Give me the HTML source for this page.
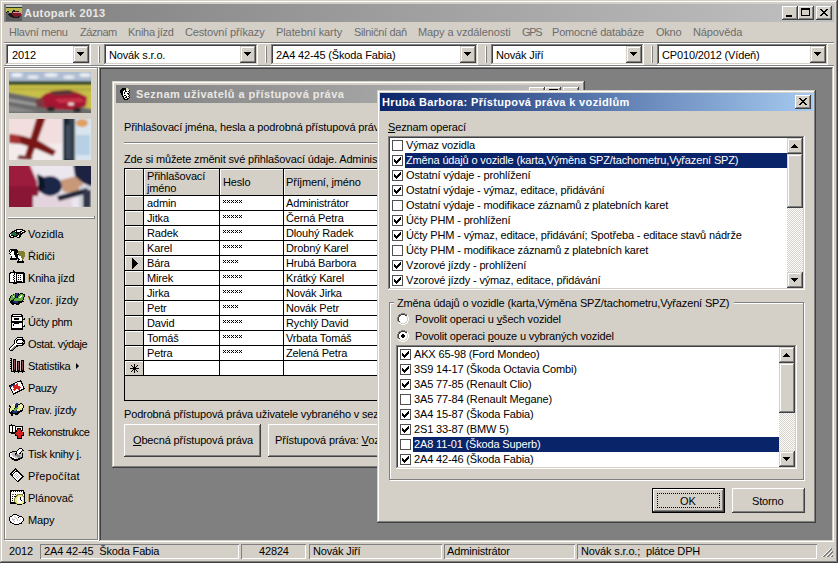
<!DOCTYPE html>
<html><head><meta charset="utf-8"><style>
html,body{margin:0;padding:0;}
body{width:838px;height:563px;overflow:hidden;position:relative;background:#d4d0c8;font-family:"Liberation Sans",sans-serif;font-size:11px;}
body div, body svg{position:absolute;}
.t{position:absolute;white-space:pre;line-height:13px;font-size:11px;}
u{text-decoration:underline;}
</style></head><body>
<div style="left:0px;top:0px;width:838px;height:563px;background:#d4d0c8;box-shadow:inset -1px -1px #404040,inset 1px 1px #d4d0c8,inset -2px -2px #808080,inset 2px 2px #ffffff;"></div>
<div style="left:4px;top:4px;width:830px;height:18px;background:linear-gradient(90deg,#808080,#c0c0c0)"></div>
<svg style="position:absolute;left:6px;top:5px" width="16" height="16" shape-rendering="crispEdges"><rect x="0" y="0" width="16" height="1" fill="#c4c8d0"/><rect x="0" y="1" width="16" height="1" fill="#c4c8d0"/><rect x="0" y="2" width="16" height="1" fill="#283818"/><rect x="0" y="3" width="16" height="1" fill="#b8b848"/><rect x="0" y="4" width="16" height="1" fill="#b8b848"/><rect x="0" y="5" width="7" height="1" fill="#b8b848"/><rect x="7" y="5" width="2" height="1" fill="#181818"/><rect x="9" y="5" width="7" height="1" fill="#b8b848"/><rect x="0" y="6" width="1" height="1" fill="#b8b848"/><rect x="1" y="6" width="2" height="1" fill="#181818"/><rect x="3" y="6" width="3" height="1" fill="#b8b848"/><rect x="6" y="6" width="3" height="1" fill="#181818"/><rect x="9" y="6" width="2" height="1" fill="#801828"/><rect x="11" y="6" width="2" height="1" fill="#181818"/><rect x="13" y="6" width="3" height="1" fill="#b8b848"/><rect x="0" y="7" width="1" height="1" fill="#181818"/><rect x="1" y="7" width="2" height="1" fill="#5c5c5c"/><rect x="3" y="7" width="3" height="1" fill="#b8b848"/><rect x="6" y="7" width="1" height="1" fill="#181818"/><rect x="7" y="7" width="8" height="1" fill="#d89098"/><rect x="15" y="7" width="1" height="1" fill="#b8b848"/><rect x="0" y="8" width="3" height="1" fill="#5c5c5c"/><rect x="3" y="8" width="3" height="1" fill="#181818"/><rect x="6" y="8" width="9" height="1" fill="#801828"/><rect x="15" y="8" width="1" height="1" fill="#d89098"/><rect x="0" y="9" width="2" height="1" fill="#5c5c5c"/><rect x="2" y="9" width="4" height="1" fill="#181818"/><rect x="6" y="9" width="9" height="1" fill="#801828"/><rect x="15" y="9" width="1" height="1" fill="#5c5c5c"/><rect x="0" y="10" width="3" height="1" fill="#5c5c5c"/><rect x="3" y="10" width="4" height="1" fill="#181818"/><rect x="7" y="10" width="8" height="1" fill="#801828"/><rect x="15" y="10" width="1" height="1" fill="#5c5c5c"/><rect x="0" y="11" width="4" height="1" fill="#5c5c5c"/><rect x="4" y="11" width="4" height="1" fill="#181818"/><rect x="8" y="11" width="4" height="1" fill="#801828"/><rect x="12" y="11" width="2" height="1" fill="#181818"/><rect x="14" y="11" width="2" height="1" fill="#5c5c5c"/><rect x="0" y="12" width="6" height="1" fill="#5c5c5c"/><rect x="6" y="12" width="1" height="1" fill="#303030"/><rect x="7" y="12" width="6" height="1" fill="#181818"/><rect x="13" y="12" width="3" height="1" fill="#5c5c5c"/><rect x="0" y="13" width="16" height="1" fill="#5c5c5c"/><rect x="0" y="14" width="16" height="1" fill="#5c5c5c"/><rect x="0" y="15" width="16" height="1" fill="#5c5c5c"/></svg>
<span class="t" style="left:24px;top:7px;color:#eae8e4;font-weight:bold;letter-spacing:0.45px;font-size:11px;">Autopark 2013</span>
<div style="left:782px;top:6px;width:16px;height:14px;background:#d4d0c8;box-shadow:inset -1px -1px #404040,inset 1px 1px #ffffff,inset -2px -2px #808080,inset 2px 2px #d4d0c8;"></div>
<div style="left:798px;top:6px;width:16px;height:14px;background:#d4d0c8;box-shadow:inset -1px -1px #404040,inset 1px 1px #ffffff,inset -2px -2px #808080,inset 2px 2px #d4d0c8;"></div>
<div style="left:816px;top:6px;width:16px;height:14px;background:#d4d0c8;box-shadow:inset -1px -1px #404040,inset 1px 1px #ffffff,inset -2px -2px #808080,inset 2px 2px #d4d0c8;"></div>
<svg style="position:absolute;left:786px;top:15px" width="6" height="2" shape-rendering="crispEdges"><rect x="0" y="0" width="6" height="1" fill="#000000"/><rect x="0" y="1" width="6" height="1" fill="#000000"/></svg>
<svg style="position:absolute;left:801px;top:8px" width="9" height="8" shape-rendering="crispEdges"><rect x="0" y="0" width="9" height="1" fill="#000000"/><rect x="0" y="1" width="9" height="1" fill="#000000"/><rect x="0" y="2" width="1" height="1" fill="#000000"/><rect x="8" y="2" width="1" height="1" fill="#000000"/><rect x="0" y="3" width="1" height="1" fill="#000000"/><rect x="8" y="3" width="1" height="1" fill="#000000"/><rect x="0" y="4" width="1" height="1" fill="#000000"/><rect x="8" y="4" width="1" height="1" fill="#000000"/><rect x="0" y="5" width="1" height="1" fill="#000000"/><rect x="8" y="5" width="1" height="1" fill="#000000"/><rect x="0" y="6" width="1" height="1" fill="#000000"/><rect x="8" y="6" width="1" height="1" fill="#000000"/><rect x="0" y="7" width="9" height="1" fill="#000000"/></svg>
<svg style="position:absolute;left:820px;top:9px" width="8" height="7" shape-rendering="crispEdges"><rect x="0" y="0" width="2" height="1" fill="#000000"/><rect x="6" y="0" width="2" height="1" fill="#000000"/><rect x="1" y="1" width="2" height="1" fill="#000000"/><rect x="5" y="1" width="2" height="1" fill="#000000"/><rect x="2" y="2" width="4" height="1" fill="#000000"/><rect x="3" y="3" width="2" height="1" fill="#000000"/><rect x="2" y="4" width="4" height="1" fill="#000000"/><rect x="1" y="5" width="2" height="1" fill="#000000"/><rect x="5" y="5" width="2" height="1" fill="#000000"/><rect x="0" y="6" width="2" height="1" fill="#000000"/><rect x="6" y="6" width="2" height="1" fill="#000000"/></svg>
<span class="t" style="left:9px;top:26px;color:#6c6c6c;font-weight:normal;letter-spacing:-0.279px;font-size:11px;">Hlavní menu</span>
<span class="t" style="left:80px;top:26px;color:#6c6c6c;font-weight:normal;letter-spacing:-0.492px;font-size:11px;">Záznam</span>
<span class="t" style="left:128px;top:26px;color:#6c6c6c;font-weight:normal;letter-spacing:-0.261px;font-size:11px;">Kniha jízd</span>
<span class="t" style="left:185px;top:26px;color:#6c6c6c;font-weight:normal;letter-spacing:-0.151px;font-size:11px;">Cestovní příkazy</span>
<span class="t" style="left:276px;top:26px;color:#6c6c6c;font-weight:normal;letter-spacing:-0.083px;font-size:11px;">Platební karty</span>
<span class="t" style="left:354px;top:26px;color:#6c6c6c;font-weight:normal;letter-spacing:-0.331px;font-size:11px;">Silniční daň</span>
<span class="t" style="left:418px;top:26px;color:#6c6c6c;font-weight:normal;letter-spacing:-0.093px;font-size:11px;">Mapy a vzdálenosti</span>
<span class="t" style="left:522px;top:26px;color:#6c6c6c;font-weight:normal;letter-spacing:-1.378px;font-size:11px;">GPS</span>
<span class="t" style="left:552px;top:26px;color:#6c6c6c;font-weight:normal;letter-spacing:-0.175px;font-size:11px;">Pomocné databáze</span>
<span class="t" style="left:656px;top:26px;color:#6c6c6c;font-weight:normal;letter-spacing:-0.224px;font-size:11px;">Okno</span>
<span class="t" style="left:693px;top:26px;color:#6c6c6c;font-weight:normal;letter-spacing:-0.107px;font-size:11px;">Nápověda</span>
<div style="left:4px;top:42px;width:830px;height:1px;background:#808080"></div>
<div style="left:4px;top:43px;width:830px;height:1px;background:#ffffff"></div>
<div style="left:4px;top:65px;width:830px;height:1px;background:#808080"></div>
<div style="left:4px;top:66px;width:830px;height:1px;background:#ffffff"></div>
<div style="left:6px;top:44px;width:85px;height:21px;background:#fff;box-shadow:inset -1px -1px #ffffff,inset 1px 1px #808080,inset -2px -2px #d4d0c8,inset 2px 2px #404040;"></div>
<div style="left:73px;top:46px;width:16px;height:17px;background:#d4d0c8;box-shadow:inset -1px -1px #404040,inset 1px 1px #d4d0c8,inset -2px -2px #808080,inset 2px 2px #ffffff;"></div>
<svg style="position:absolute;left:77px;top:52px" width="7" height="4" shape-rendering="crispEdges"><rect x="0" y="0" width="7" height="1" fill="#000000"/><rect x="1" y="1" width="5" height="1" fill="#000000"/><rect x="2" y="2" width="3" height="1" fill="#000000"/><rect x="3" y="3" width="1" height="1" fill="#000000"/></svg>
<span class="t" style="left:12px;top:49px;color:#000;font-weight:normal;letter-spacing:-0.15px;font-size:11px;">2012</span>
<div style="left:104px;top:44px;width:154px;height:21px;background:#fff;box-shadow:inset -1px -1px #ffffff,inset 1px 1px #808080,inset -2px -2px #d4d0c8,inset 2px 2px #404040;"></div>
<div style="left:240px;top:46px;width:16px;height:17px;background:#d4d0c8;box-shadow:inset -1px -1px #404040,inset 1px 1px #d4d0c8,inset -2px -2px #808080,inset 2px 2px #ffffff;"></div>
<svg style="position:absolute;left:244px;top:52px" width="7" height="4" shape-rendering="crispEdges"><rect x="0" y="0" width="7" height="1" fill="#000000"/><rect x="1" y="1" width="5" height="1" fill="#000000"/><rect x="2" y="2" width="3" height="1" fill="#000000"/><rect x="3" y="3" width="1" height="1" fill="#000000"/></svg>
<span class="t" style="left:109px;top:49px;color:#000;font-weight:normal;letter-spacing:-0.15px;font-size:11px;">Novák s.r.o.</span>
<div style="left:271px;top:44px;width:207px;height:21px;background:#fff;box-shadow:inset -1px -1px #ffffff,inset 1px 1px #808080,inset -2px -2px #d4d0c8,inset 2px 2px #404040;"></div>
<div style="left:460px;top:46px;width:16px;height:17px;background:#d4d0c8;box-shadow:inset -1px -1px #404040,inset 1px 1px #d4d0c8,inset -2px -2px #808080,inset 2px 2px #ffffff;"></div>
<svg style="position:absolute;left:464px;top:52px" width="7" height="4" shape-rendering="crispEdges"><rect x="0" y="0" width="7" height="1" fill="#000000"/><rect x="1" y="1" width="5" height="1" fill="#000000"/><rect x="2" y="2" width="3" height="1" fill="#000000"/><rect x="3" y="3" width="1" height="1" fill="#000000"/></svg>
<span class="t" style="left:276px;top:49px;color:#000;font-weight:normal;letter-spacing:-0.15px;font-size:11px;">2A4 42-45 (Škoda Fabia)</span>
<div style="left:491px;top:44px;width:153px;height:21px;background:#fff;box-shadow:inset -1px -1px #ffffff,inset 1px 1px #808080,inset -2px -2px #d4d0c8,inset 2px 2px #404040;"></div>
<div style="left:626px;top:46px;width:16px;height:17px;background:#d4d0c8;box-shadow:inset -1px -1px #404040,inset 1px 1px #d4d0c8,inset -2px -2px #808080,inset 2px 2px #ffffff;"></div>
<svg style="position:absolute;left:630px;top:52px" width="7" height="4" shape-rendering="crispEdges"><rect x="0" y="0" width="7" height="1" fill="#000000"/><rect x="1" y="1" width="5" height="1" fill="#000000"/><rect x="2" y="2" width="3" height="1" fill="#000000"/><rect x="3" y="3" width="1" height="1" fill="#000000"/></svg>
<span class="t" style="left:496px;top:49px;color:#000;font-weight:normal;letter-spacing:-0.15px;font-size:11px;">Novák Jiří</span>
<div style="left:657px;top:44px;width:171px;height:21px;background:#fff;box-shadow:inset -1px -1px #ffffff,inset 1px 1px #808080,inset -2px -2px #d4d0c8,inset 2px 2px #404040;"></div>
<div style="left:810px;top:46px;width:16px;height:17px;background:#d4d0c8;box-shadow:inset -1px -1px #404040,inset 1px 1px #d4d0c8,inset -2px -2px #808080,inset 2px 2px #ffffff;"></div>
<svg style="position:absolute;left:814px;top:52px" width="7" height="4" shape-rendering="crispEdges"><rect x="0" y="0" width="7" height="1" fill="#000000"/><rect x="1" y="1" width="5" height="1" fill="#000000"/><rect x="2" y="2" width="3" height="1" fill="#000000"/><rect x="3" y="3" width="1" height="1" fill="#000000"/></svg>
<span class="t" style="left:662px;top:49px;color:#000;font-weight:normal;letter-spacing:-0.15px;font-size:11px;">CP010/2012 (Vídeň)</span>
<div style="left:98px;top:46px;width:1px;height:17px;background:#ffffff"></div>
<div style="left:99px;top:46px;width:1px;height:17px;background:#808080"></div>
<div style="left:265px;top:46px;width:1px;height:17px;background:#ffffff"></div>
<div style="left:266px;top:46px;width:1px;height:17px;background:#808080"></div>
<div style="left:485px;top:46px;width:1px;height:17px;background:#ffffff"></div>
<div style="left:486px;top:46px;width:1px;height:17px;background:#808080"></div>
<div style="left:651px;top:46px;width:1px;height:17px;background:#ffffff"></div>
<div style="left:652px;top:46px;width:1px;height:17px;background:#808080"></div>
<div style="left:4px;top:67px;width:94px;height:473px;box-shadow:inset 1px 1px #808080,1px 1px 0 #ffffff, inset -1px -1px #808080, inset 2px 2px #ffffff"></div>
<svg style="position:absolute;left:9px;top:72px" width="82" height="41"><defs><filter id="bl1" x="-10%" y="-10%" width="120%" height="120%"><feGaussianBlur stdDeviation="1"/></filter><clipPath id="c1"><rect width="82" height="41"/></clipPath></defs>
<g clip-path="url(#c1)"><g filter="url(#bl1)">
<rect x="-3" y="-3" width="90" height="16" fill="#aebcd2"/>
<ellipse cx="8" cy="3" rx="6" ry="2" fill="#eef2f6"/><ellipse cx="24" cy="5" rx="6" ry="2" fill="#e2e8f0"/><ellipse cx="42" cy="3" rx="7" ry="2" fill="#eaeef4"/><ellipse cx="60" cy="5" rx="6" ry="2" fill="#e4e8ee"/><ellipse cx="76" cy="3" rx="6" ry="2" fill="#eceff2"/>
<rect x="-3" y="9" width="90" height="4" fill="#34482a"/>
<polygon points="-3,13 86,13 86,38 45,30 -3,21" fill="#c8c04a"/>
<polygon points="-3,16 86,16 86,19 -3,18" fill="#b4ac3e"/>
<polygon points="-3,20 45,29 86,38 86,44 -3,44" fill="#6a6a6a"/>
<polygon points="-3,26 40,34 40,36 -3,29" fill="#a0a0a0"/>
<polygon points="-3,33 30,40 -3,40" fill="#8a8a8a"/>
<polygon points="30,27 36,22 44,19 60,18 70,21 78,25 77,34 64,38 38,37 31,33" fill="#a41830"/><polygon points="26,28 34,26 36,36 28,35" fill="#7a3a40"/>
<polygon points="42,20 60,18 66,22 44,23" fill="#503838"/>
<polygon points="46,27 72,26 76,30 50,31" fill="#c83048"/>
<ellipse cx="62" cy="32" rx="3" ry="1.5" fill="#f0e0e0"/>
<ellipse cx="42" cy="37" rx="4" ry="2.5" fill="#282828"/><ellipse cx="68" cy="38" rx="4" ry="2.5" fill="#282828"/>
</g></g></svg>
<svg style="position:absolute;left:9px;top:119px" width="82" height="41"><defs><filter id="bl2" x="-10%" y="-10%" width="120%" height="120%"><feGaussianBlur stdDeviation="0.8"/></filter><clipPath id="c2"><rect width="82" height="41"/></clipPath></defs>
<g clip-path="url(#c2)"><g filter="url(#bl2)">
<rect x="-3" y="-3" width="60" height="50" fill="#f2dede"/>
<rect x="-3" y="25" width="60" height="20" fill="#f4ecec"/>
<polygon points="28,-2 37,-2 22,40 15,40" fill="#7a1818"/>
<polygon points="0,15 14,17 30,22 47,32 44,37 28,30 12,25 0,24" fill="#7a1818"/>
<polygon points="0,15 10,16 12,24 0,24" fill="#a83030"/>
<polygon points="10,36 24,38 22,41 8,40" fill="#7a3030"/>
<rect x="53" y="-3" width="32" height="50" fill="#d8e4ee"/>
<rect x="54" y="-3" width="6" height="50" fill="#1c2630"/><rect x="60" y="-3" width="6" height="50" fill="#34404c"/>
<rect x="57" y="6" width="4" height="34" fill="#405060"/>
<ellipse cx="73" cy="4" rx="6" ry="4" fill="#e0a060"/>
<rect x="67" y="16" width="14" height="20" fill="#b8d0e4"/>
</g></g></svg>
<svg style="position:absolute;left:9px;top:166px" width="82" height="41"><defs><filter id="bl3" x="-10%" y="-10%" width="120%" height="120%"><feGaussianBlur stdDeviation="1"/></filter><clipPath id="c3"><rect width="82" height="41"/></clipPath></defs>
<g clip-path="url(#c3)"><g filter="url(#bl3)">
<rect x="-3" y="-3" width="90" height="50" fill="#ece6ee"/>
<polygon points="-3,-3 20,-3 28,16 30,44 -3,44" fill="#9c1c3c"/>
<polygon points="-3,20 30,20 28,44 -3,44" fill="#8a1834"/>
<polygon points="24,30 62,30 64,44 24,44" fill="#e4d4de"/>
<ellipse cx="41" cy="20" rx="12" ry="10" fill="#1c2848"/>
<polygon points="28,8 35,11 36,22 30,26" fill="#101828"/>
<polygon points="52,14 68,10 74,18 70,27 54,26" fill="#c89878"/>
<polygon points="64,-3 85,-3 85,22 74,17 66,10" fill="#1c2440"/>
<rect x="70" y="20" width="14" height="24" fill="#d0d2da"/>
<polygon points="48,30 78,22 80,27 50,35" fill="#202838"/>
<rect x="74" y="24" width="8" height="18" fill="#303848"/>
</g></g></svg>
<div style="left:8px;top:217px;width:87px;height:1px;background:#ffffff"></div>
<div style="left:8px;top:218px;width:87px;height:1px;background:#808080"></div>
<div style="left:94px;top:216px;width:1px;height:3px;background:#808080"></div>
<span class="t" style="left:28px;top:228px;color:#000;font-weight:normal;letter-spacing:0.031px;font-size:11px;">Vozidla</span>
<svg style="position:absolute;left:6px;top:222px" width="20" height="16" shape-rendering="crispEdges"><rect x="10" y="7" width="7" height="1" fill="#000000"/><rect x="8" y="8" width="3" height="1" fill="#000000"/><rect x="11" y="8" width="5" height="1" fill="#ffffff"/><rect x="16" y="8" width="3" height="1" fill="#000000"/><rect x="6" y="9" width="3" height="1" fill="#000000"/><rect x="9" y="9" width="1" height="1" fill="#ffffff"/><rect x="10" y="9" width="1" height="1" fill="#000000"/><rect x="11" y="9" width="3" height="1" fill="#ffffff"/><rect x="14" y="9" width="2" height="1" fill="#000000"/><rect x="16" y="9" width="2" height="1" fill="#ffffff"/><rect x="18" y="9" width="2" height="1" fill="#000000"/><rect x="5" y="10" width="2" height="1" fill="#000000"/><rect x="7" y="10" width="2" height="1" fill="#207040"/><rect x="9" y="10" width="6" height="1" fill="#000000"/><rect x="15" y="10" width="1" height="1" fill="#ffffff"/><rect x="16" y="10" width="3" height="1" fill="#000000"/><rect x="4" y="11" width="1" height="1" fill="#000000"/><rect x="5" y="11" width="5" height="1" fill="#207040"/><rect x="10" y="11" width="3" height="1" fill="#000000"/><rect x="13" y="11" width="1" height="1" fill="#207040"/><rect x="14" y="11" width="3" height="1" fill="#000000"/><rect x="3" y="12" width="1" height="1" fill="#000000"/><rect x="4" y="12" width="1" height="1" fill="#ffffff"/><rect x="5" y="12" width="7" height="1" fill="#207040"/><rect x="12" y="12" width="1" height="1" fill="#000000"/><rect x="13" y="12" width="1" height="1" fill="#207040"/><rect x="14" y="12" width="2" height="1" fill="#000000"/><rect x="3" y="13" width="1" height="1" fill="#000000"/><rect x="4" y="13" width="1" height="1" fill="#ffffff"/><rect x="5" y="13" width="3" height="1" fill="#000000"/><rect x="8" y="13" width="2" height="1" fill="#207040"/><rect x="10" y="13" width="2" height="1" fill="#000000"/><rect x="12" y="13" width="1" height="1" fill="#ffffff"/><rect x="13" y="13" width="2" height="1" fill="#000000"/><rect x="3" y="14" width="2" height="1" fill="#000000"/><rect x="5" y="14" width="2" height="1" fill="#ffffff"/><rect x="7" y="14" width="4" height="1" fill="#000000"/><rect x="11" y="14" width="2" height="1" fill="#ffffff"/><rect x="13" y="14" width="2" height="1" fill="#000000"/><rect x="4" y="15" width="4" height="1" fill="#000000"/><rect x="11" y="15" width="3" height="1" fill="#000000"/></svg>
<span class="t" style="left:28px;top:250px;color:#000;font-weight:normal;letter-spacing:-0.034px;font-size:11px;">Řidiči</span>
<svg style="position:absolute;left:7px;top:246px" width="20" height="17" shape-rendering="crispEdges"><rect x="3" y="3" width="7" height="1" fill="#000000"/><rect x="2" y="4" width="1" height="1" fill="#000000"/><rect x="3" y="4" width="1" height="1" fill="#ffffff"/><rect x="4" y="4" width="7" height="1" fill="#000000"/><rect x="2" y="5" width="1" height="1" fill="#000000"/><rect x="3" y="5" width="1" height="1" fill="#ffffff"/><rect x="4" y="5" width="1" height="1" fill="#000000"/><rect x="5" y="5" width="2" height="1" fill="#ffffff"/><rect x="7" y="5" width="4" height="1" fill="#000000"/><rect x="11" y="5" width="6" height="1" fill="#808030"/><rect x="3" y="6" width="1" height="1" fill="#000000"/><rect x="4" y="6" width="3" height="1" fill="#ffffff"/><rect x="7" y="6" width="4" height="1" fill="#000000"/><rect x="11" y="6" width="7" height="1" fill="#808030"/><rect x="2" y="7" width="1" height="1" fill="#000000"/><rect x="3" y="7" width="4" height="1" fill="#ffffff"/><rect x="7" y="7" width="3" height="1" fill="#000000"/><rect x="10" y="7" width="1" height="1" fill="#ffffff"/><rect x="11" y="7" width="7" height="1" fill="#808030"/><rect x="3" y="8" width="1" height="1" fill="#000000"/><rect x="4" y="8" width="3" height="1" fill="#ffffff"/><rect x="7" y="8" width="5" height="1" fill="#000000"/><rect x="12" y="8" width="6" height="1" fill="#808030"/><rect x="3" y="9" width="5" height="1" fill="#ffffff"/><rect x="8" y="9" width="3" height="1" fill="#000000"/><rect x="11" y="9" width="1" height="1" fill="#ffffff"/><rect x="12" y="9" width="6" height="1" fill="#808030"/><rect x="4" y="10" width="1" height="1" fill="#000000"/><rect x="5" y="10" width="3" height="1" fill="#ffffff"/><rect x="8" y="10" width="3" height="1" fill="#000000"/><rect x="11" y="10" width="3" height="1" fill="#ffffff"/><rect x="14" y="10" width="4" height="1" fill="#808030"/><rect x="4" y="11" width="1" height="1" fill="#000000"/><rect x="5" y="11" width="4" height="1" fill="#ffffff"/><rect x="9" y="11" width="2" height="1" fill="#000000"/><rect x="11" y="11" width="3" height="1" fill="#ffffff"/><rect x="14" y="11" width="3" height="1" fill="#808030"/><rect x="3" y="12" width="9" height="1" fill="#000000"/><rect x="12" y="12" width="3" height="1" fill="#ffffff"/><rect x="15" y="12" width="2" height="1" fill="#808030"/><rect x="3" y="13" width="7" height="1" fill="#000000"/><rect x="11" y="13" width="2" height="1" fill="#000000"/><rect x="13" y="13" width="2" height="1" fill="#ffffff"/><rect x="15" y="13" width="1" height="1" fill="#808030"/><rect x="11" y="14" width="1" height="1" fill="#000000"/><rect x="12" y="14" width="3" height="1" fill="#ffffff"/><rect x="15" y="14" width="1" height="1" fill="#000000"/><rect x="10" y="15" width="7" height="1" fill="#000000"/><rect x="10" y="16" width="7" height="1" fill="#000000"/></svg>
<span class="t" style="left:28px;top:272px;color:#000;font-weight:normal;letter-spacing:-0.201px;font-size:11px;">Kniha jízd</span>
<svg style="position:absolute;left:7px;top:267px" width="20" height="17" shape-rendering="crispEdges"><rect x="6" y="3" width="1" height="1" fill="#000000"/><rect x="6" y="4" width="2" height="1" fill="#000000"/><rect x="3" y="5" width="14" height="1" fill="#000000"/><rect x="2" y="6" width="2" height="1" fill="#000000"/><rect x="4" y="6" width="3" height="1" fill="#ffffff"/><rect x="7" y="6" width="1" height="1" fill="#000000"/><rect x="8" y="6" width="1" height="1" fill="#ffffff"/><rect x="9" y="6" width="9" height="1" fill="#000000"/><rect x="2" y="7" width="1" height="1" fill="#000000"/><rect x="3" y="7" width="4" height="1" fill="#ffffff"/><rect x="7" y="7" width="1" height="1" fill="#000000"/><rect x="8" y="7" width="1" height="1" fill="#ffffff"/><rect x="9" y="7" width="1" height="1" fill="#000000"/><rect x="10" y="7" width="6" height="1" fill="#ffffff"/><rect x="16" y="7" width="2" height="1" fill="#000000"/><rect x="2" y="8" width="1" height="1" fill="#000000"/><rect x="3" y="8" width="3" height="1" fill="#ffffff"/><rect x="6" y="8" width="1" height="1" fill="#000000"/><rect x="7" y="8" width="2" height="1" fill="#ffffff"/><rect x="9" y="8" width="1" height="1" fill="#000000"/><rect x="10" y="8" width="1" height="1" fill="#ffffff"/><rect x="11" y="8" width="1" height="1" fill="#000000"/><rect x="12" y="8" width="1" height="1" fill="#ffffff"/><rect x="13" y="8" width="1" height="1" fill="#000000"/><rect x="14" y="8" width="2" height="1" fill="#ffffff"/><rect x="16" y="8" width="2" height="1" fill="#000000"/><rect x="2" y="9" width="1" height="1" fill="#000000"/><rect x="3" y="9" width="4" height="1" fill="#ffffff"/><rect x="7" y="9" width="1" height="1" fill="#000000"/><rect x="8" y="9" width="1" height="1" fill="#ffffff"/><rect x="9" y="9" width="1" height="1" fill="#000000"/><rect x="10" y="9" width="6" height="1" fill="#ffffff"/><rect x="16" y="9" width="2" height="1" fill="#000000"/><rect x="2" y="10" width="1" height="1" fill="#000000"/><rect x="3" y="10" width="3" height="1" fill="#ffffff"/><rect x="6" y="10" width="1" height="1" fill="#000000"/><rect x="7" y="10" width="2" height="1" fill="#ffffff"/><rect x="9" y="10" width="1" height="1" fill="#000000"/><rect x="10" y="10" width="1" height="1" fill="#ffffff"/><rect x="11" y="10" width="1" height="1" fill="#000000"/><rect x="12" y="10" width="1" height="1" fill="#ffffff"/><rect x="13" y="10" width="1" height="1" fill="#000000"/><rect x="14" y="10" width="2" height="1" fill="#ffffff"/><rect x="16" y="10" width="2" height="1" fill="#000000"/><rect x="2" y="11" width="1" height="1" fill="#000000"/><rect x="3" y="11" width="4" height="1" fill="#ffffff"/><rect x="7" y="11" width="1" height="1" fill="#000000"/><rect x="8" y="11" width="1" height="1" fill="#ffffff"/><rect x="9" y="11" width="1" height="1" fill="#000000"/><rect x="10" y="11" width="6" height="1" fill="#ffffff"/><rect x="16" y="11" width="2" height="1" fill="#000000"/><rect x="2" y="12" width="1" height="1" fill="#000000"/><rect x="3" y="12" width="3" height="1" fill="#ffffff"/><rect x="6" y="12" width="1" height="1" fill="#000000"/><rect x="7" y="12" width="2" height="1" fill="#ffffff"/><rect x="9" y="12" width="1" height="1" fill="#000000"/><rect x="10" y="12" width="1" height="1" fill="#ffffff"/><rect x="11" y="12" width="1" height="1" fill="#000000"/><rect x="12" y="12" width="1" height="1" fill="#ffffff"/><rect x="13" y="12" width="1" height="1" fill="#000000"/><rect x="14" y="12" width="2" height="1" fill="#ffffff"/><rect x="16" y="12" width="2" height="1" fill="#000000"/><rect x="2" y="13" width="1" height="1" fill="#000000"/><rect x="3" y="13" width="4" height="1" fill="#ffffff"/><rect x="7" y="13" width="1" height="1" fill="#000000"/><rect x="8" y="13" width="1" height="1" fill="#ffffff"/><rect x="9" y="13" width="1" height="1" fill="#000000"/><rect x="10" y="13" width="6" height="1" fill="#ffffff"/><rect x="16" y="13" width="2" height="1" fill="#000000"/><rect x="2" y="14" width="1" height="1" fill="#000000"/><rect x="3" y="14" width="4" height="1" fill="#ffffff"/><rect x="7" y="14" width="1" height="1" fill="#000000"/><rect x="8" y="14" width="1" height="1" fill="#ffffff"/><rect x="9" y="14" width="6" height="1" fill="#000000"/><rect x="15" y="14" width="1" height="1" fill="#ffffff"/><rect x="16" y="14" width="2" height="1" fill="#000000"/><rect x="2" y="15" width="16" height="1" fill="#000000"/><rect x="6" y="16" width="4" height="1" fill="#000000"/></svg>
<span class="t" style="left:28px;top:294px;color:#000;font-weight:normal;letter-spacing:-0.041px;font-size:11px;">Vzor. jízdy</span>
<svg style="position:absolute;left:7px;top:290px" width="20" height="15" shape-rendering="crispEdges"><rect x="8" y="3" width="1" height="1" fill="#000000"/><rect x="9" y="3" width="2" height="1" fill="#203080"/><rect x="11" y="3" width="1" height="1" fill="#000000"/><rect x="13" y="3" width="3" height="1" fill="#000000"/><rect x="6" y="4" width="1" height="1" fill="#000000"/><rect x="7" y="4" width="1" height="1" fill="#60b040"/><rect x="8" y="4" width="3" height="1" fill="#203080"/><rect x="11" y="4" width="2" height="1" fill="#000000"/><rect x="13" y="4" width="3" height="1" fill="#60b040"/><rect x="16" y="4" width="2" height="1" fill="#000000"/><rect x="4" y="5" width="1" height="1" fill="#000000"/><rect x="5" y="5" width="3" height="1" fill="#60b040"/><rect x="8" y="5" width="1" height="1" fill="#000000"/><rect x="9" y="5" width="2" height="1" fill="#203080"/><rect x="11" y="5" width="1" height="1" fill="#000000"/><rect x="12" y="5" width="2" height="1" fill="#60b040"/><rect x="14" y="5" width="1" height="1" fill="#ffffff"/><rect x="15" y="5" width="2" height="1" fill="#60b040"/><rect x="17" y="5" width="1" height="1" fill="#000000"/><rect x="3" y="6" width="1" height="1" fill="#000000"/><rect x="4" y="6" width="2" height="1" fill="#60b040"/><rect x="6" y="6" width="1" height="1" fill="#ffffff"/><rect x="7" y="6" width="1" height="1" fill="#60b040"/><rect x="8" y="6" width="1" height="1" fill="#000000"/><rect x="9" y="6" width="1" height="1" fill="#203080"/><rect x="10" y="6" width="1" height="1" fill="#000000"/><rect x="11" y="6" width="2" height="1" fill="#60b040"/><rect x="13" y="6" width="2" height="1" fill="#ffffff"/><rect x="15" y="6" width="2" height="1" fill="#60b040"/><rect x="17" y="6" width="1" height="1" fill="#000000"/><rect x="3" y="7" width="1" height="1" fill="#000000"/><rect x="4" y="7" width="4" height="1" fill="#60b040"/><rect x="8" y="7" width="1" height="1" fill="#000000"/><rect x="9" y="7" width="1" height="1" fill="#203080"/><rect x="10" y="7" width="1" height="1" fill="#000000"/><rect x="11" y="7" width="1" height="1" fill="#60b040"/><rect x="12" y="7" width="2" height="1" fill="#ffffff"/><rect x="14" y="7" width="2" height="1" fill="#60b040"/><rect x="16" y="7" width="1" height="1" fill="#000000"/><rect x="2" y="8" width="1" height="1" fill="#000000"/><rect x="3" y="8" width="4" height="1" fill="#60b040"/><rect x="7" y="8" width="1" height="1" fill="#000000"/><rect x="8" y="8" width="8" height="1" fill="#60b040"/><rect x="16" y="8" width="1" height="1" fill="#000000"/><rect x="2" y="9" width="1" height="1" fill="#000000"/><rect x="3" y="9" width="3" height="1" fill="#60b040"/><rect x="6" y="9" width="1" height="1" fill="#000000"/><rect x="7" y="9" width="9" height="1" fill="#60b040"/><rect x="16" y="9" width="1" height="1" fill="#000000"/><rect x="2" y="10" width="1" height="1" fill="#000000"/><rect x="3" y="10" width="1" height="1" fill="#60b040"/><rect x="4" y="10" width="3" height="1" fill="#000000"/><rect x="7" y="10" width="8" height="1" fill="#60b040"/><rect x="15" y="10" width="1" height="1" fill="#000000"/><rect x="3" y="11" width="3" height="1" fill="#000000"/><rect x="6" y="11" width="5" height="1" fill="#203080"/><rect x="11" y="11" width="6" height="1" fill="#000000"/><rect x="3" y="12" width="4" height="1" fill="#000000"/><rect x="7" y="12" width="4" height="1" fill="#203080"/><rect x="11" y="12" width="4" height="1" fill="#000000"/><rect x="4" y="13" width="9" height="1" fill="#000000"/><rect x="5" y="14" width="2" height="1" fill="#000000"/><rect x="9" y="14" width="3" height="1" fill="#000000"/></svg>
<span class="t" style="left:28px;top:316px;color:#000;font-weight:normal;letter-spacing:-0.284px;font-size:11px;">Účty phm</span>
<svg style="position:absolute;left:7px;top:313px" width="20" height="17" shape-rendering="crispEdges"><rect x="5" y="1" width="10" height="1" fill="#000000"/><rect x="4" y="2" width="2" height="1" fill="#000000"/><rect x="6" y="2" width="8" height="1" fill="#ffffff"/><rect x="14" y="2" width="2" height="1" fill="#000000"/><rect x="4" y="3" width="12" height="1" fill="#000000"/><rect x="4" y="4" width="1" height="1" fill="#000000"/><rect x="5" y="4" width="10" height="1" fill="#ffffff"/><rect x="15" y="4" width="1" height="1" fill="#000000"/><rect x="4" y="5" width="1" height="1" fill="#000000"/><rect x="5" y="5" width="2" height="1" fill="#ffffff"/><rect x="7" y="5" width="5" height="1" fill="#000000"/><rect x="12" y="5" width="3" height="1" fill="#ffffff"/><rect x="15" y="5" width="1" height="1" fill="#000000"/><rect x="17" y="5" width="1" height="1" fill="#000000"/><rect x="4" y="6" width="1" height="1" fill="#000000"/><rect x="5" y="6" width="2" height="1" fill="#ffffff"/><rect x="7" y="6" width="5" height="1" fill="#000000"/><rect x="12" y="6" width="3" height="1" fill="#ffffff"/><rect x="15" y="6" width="3" height="1" fill="#000000"/><rect x="4" y="7" width="1" height="1" fill="#000000"/><rect x="5" y="7" width="10" height="1" fill="#ffffff"/><rect x="15" y="7" width="1" height="1" fill="#000000"/><rect x="4" y="8" width="12" height="1" fill="#000000"/><rect x="4" y="9" width="12" height="1" fill="#000000"/><rect x="16" y="9" width="1" height="1" fill="#ffffff"/><rect x="4" y="10" width="1" height="1" fill="#000000"/><rect x="5" y="10" width="2" height="1" fill="#ffffff"/><rect x="7" y="10" width="5" height="1" fill="#000000"/><rect x="12" y="10" width="3" height="1" fill="#ffffff"/><rect x="15" y="10" width="1" height="1" fill="#000000"/><rect x="16" y="10" width="1" height="1" fill="#ffffff"/><rect x="4" y="11" width="1" height="1" fill="#000000"/><rect x="5" y="11" width="1" height="1" fill="#ffffff"/><rect x="6" y="11" width="1" height="1" fill="#000000"/><rect x="7" y="11" width="8" height="1" fill="#ffffff"/><rect x="15" y="11" width="1" height="1" fill="#000000"/><rect x="16" y="11" width="1" height="1" fill="#ffffff"/><rect x="4" y="12" width="1" height="1" fill="#000000"/><rect x="5" y="12" width="1" height="1" fill="#ffffff"/><rect x="6" y="12" width="1" height="1" fill="#000000"/><rect x="7" y="12" width="8" height="1" fill="#ffffff"/><rect x="15" y="12" width="1" height="1" fill="#000000"/><rect x="16" y="12" width="1" height="1" fill="#ffffff"/><rect x="17" y="12" width="1" height="1" fill="#000000"/><rect x="4" y="13" width="1" height="1" fill="#000000"/><rect x="5" y="13" width="10" height="1" fill="#ffffff"/><rect x="15" y="13" width="3" height="1" fill="#000000"/><rect x="4" y="14" width="1" height="1" fill="#000000"/><rect x="5" y="14" width="10" height="1" fill="#ffffff"/><rect x="15" y="14" width="1" height="1" fill="#000000"/><rect x="4" y="15" width="12" height="1" fill="#000000"/><rect x="4" y="16" width="12" height="1" fill="#000000"/></svg>
<span class="t" style="left:28px;top:338px;color:#000;font-weight:normal;letter-spacing:-0.377px;font-size:11px;">Ostat. výdaje</span>
<svg style="position:absolute;left:7px;top:335px" width="20" height="16" shape-rendering="crispEdges"><rect x="10" y="2" width="6" height="1" fill="#000000"/><rect x="9" y="3" width="1" height="1" fill="#000000"/><rect x="10" y="3" width="5" height="1" fill="#ffffff"/><rect x="15" y="3" width="1" height="1" fill="#000000"/><rect x="8" y="4" width="1" height="1" fill="#000000"/><rect x="9" y="4" width="1" height="1" fill="#ffffff"/><rect x="10" y="4" width="7" height="1" fill="#000000"/><rect x="7" y="5" width="1" height="1" fill="#000000"/><rect x="8" y="5" width="1" height="1" fill="#ffffff"/><rect x="9" y="5" width="2" height="1" fill="#000000"/><rect x="11" y="5" width="4" height="1" fill="#ffffff"/><rect x="15" y="5" width="3" height="1" fill="#000000"/><rect x="7" y="6" width="1" height="1" fill="#000000"/><rect x="8" y="6" width="1" height="1" fill="#ffffff"/><rect x="9" y="6" width="1" height="1" fill="#000000"/><rect x="10" y="6" width="6" height="1" fill="#ffffff"/><rect x="16" y="6" width="2" height="1" fill="#000000"/><rect x="7" y="7" width="1" height="1" fill="#000000"/><rect x="8" y="7" width="1" height="1" fill="#ffffff"/><rect x="9" y="7" width="1" height="1" fill="#000000"/><rect x="10" y="7" width="5" height="1" fill="#ffffff"/><rect x="15" y="7" width="1" height="1" fill="#000000"/><rect x="17" y="7" width="1" height="1" fill="#000000"/><rect x="7" y="8" width="1" height="1" fill="#000000"/><rect x="8" y="8" width="2" height="1" fill="#ffffff"/><rect x="10" y="8" width="8" height="1" fill="#000000"/><rect x="6" y="9" width="1" height="1" fill="#000000"/><rect x="7" y="9" width="8" height="1" fill="#ffffff"/><rect x="15" y="9" width="2" height="1" fill="#000000"/><rect x="5" y="10" width="1" height="1" fill="#000000"/><rect x="6" y="10" width="3" height="1" fill="#ffffff"/><rect x="9" y="10" width="7" height="1" fill="#000000"/><rect x="4" y="11" width="1" height="1" fill="#000000"/><rect x="5" y="11" width="2" height="1" fill="#ffffff"/><rect x="7" y="11" width="2" height="1" fill="#808080"/><rect x="9" y="11" width="2" height="1" fill="#000000"/><rect x="3" y="12" width="1" height="1" fill="#000000"/><rect x="4" y="12" width="2" height="1" fill="#ffffff"/><rect x="6" y="12" width="2" height="1" fill="#808080"/><rect x="8" y="12" width="1" height="1" fill="#000000"/><rect x="2" y="13" width="1" height="1" fill="#000000"/><rect x="3" y="13" width="2" height="1" fill="#ffffff"/><rect x="5" y="13" width="2" height="1" fill="#808080"/><rect x="7" y="13" width="1" height="1" fill="#000000"/><rect x="2" y="14" width="1" height="1" fill="#000000"/><rect x="3" y="14" width="1" height="1" fill="#ffffff"/><rect x="4" y="14" width="2" height="1" fill="#808080"/><rect x="6" y="14" width="1" height="1" fill="#000000"/><rect x="3" y="15" width="3" height="1" fill="#000000"/></svg>
<span class="t" style="left:28px;top:360px;color:#000;font-weight:normal;letter-spacing:-0.224px;font-size:11px;">Statistika</span>
<svg style="position:absolute;left:7px;top:356px" width="20" height="17" shape-rendering="crispEdges"><rect x="3" y="2" width="2" height="1" fill="#000000"/><rect x="4" y="3" width="1" height="1" fill="#000000"/><rect x="6" y="3" width="3" height="1" fill="#000000"/><rect x="3" y="4" width="2" height="1" fill="#000000"/><rect x="6" y="4" width="1" height="1" fill="#000000"/><rect x="7" y="4" width="1" height="1" fill="#904858"/><rect x="8" y="4" width="1" height="1" fill="#000000"/><rect x="14" y="4" width="3" height="1" fill="#000000"/><rect x="4" y="5" width="1" height="1" fill="#000000"/><rect x="6" y="5" width="1" height="1" fill="#000000"/><rect x="7" y="5" width="1" height="1" fill="#904858"/><rect x="8" y="5" width="1" height="1" fill="#000000"/><rect x="10" y="5" width="3" height="1" fill="#000000"/><rect x="14" y="5" width="1" height="1" fill="#000000"/><rect x="15" y="5" width="1" height="1" fill="#904858"/><rect x="16" y="5" width="1" height="1" fill="#000000"/><rect x="3" y="6" width="2" height="1" fill="#000000"/><rect x="6" y="6" width="1" height="1" fill="#000000"/><rect x="7" y="6" width="1" height="1" fill="#904858"/><rect x="8" y="6" width="1" height="1" fill="#000000"/><rect x="10" y="6" width="1" height="1" fill="#000000"/><rect x="11" y="6" width="1" height="1" fill="#904858"/><rect x="12" y="6" width="1" height="1" fill="#000000"/><rect x="14" y="6" width="1" height="1" fill="#000000"/><rect x="15" y="6" width="1" height="1" fill="#904858"/><rect x="16" y="6" width="1" height="1" fill="#000000"/><rect x="4" y="7" width="1" height="1" fill="#000000"/><rect x="6" y="7" width="1" height="1" fill="#000000"/><rect x="7" y="7" width="1" height="1" fill="#904858"/><rect x="8" y="7" width="1" height="1" fill="#000000"/><rect x="10" y="7" width="1" height="1" fill="#000000"/><rect x="11" y="7" width="1" height="1" fill="#904858"/><rect x="12" y="7" width="1" height="1" fill="#000000"/><rect x="14" y="7" width="1" height="1" fill="#000000"/><rect x="15" y="7" width="1" height="1" fill="#904858"/><rect x="16" y="7" width="1" height="1" fill="#000000"/><rect x="3" y="8" width="2" height="1" fill="#000000"/><rect x="6" y="8" width="1" height="1" fill="#000000"/><rect x="7" y="8" width="1" height="1" fill="#904858"/><rect x="8" y="8" width="1" height="1" fill="#000000"/><rect x="10" y="8" width="1" height="1" fill="#000000"/><rect x="11" y="8" width="1" height="1" fill="#904858"/><rect x="12" y="8" width="1" height="1" fill="#000000"/><rect x="14" y="8" width="1" height="1" fill="#000000"/><rect x="15" y="8" width="1" height="1" fill="#904858"/><rect x="16" y="8" width="1" height="1" fill="#000000"/><rect x="4" y="9" width="1" height="1" fill="#000000"/><rect x="6" y="9" width="1" height="1" fill="#000000"/><rect x="7" y="9" width="1" height="1" fill="#904858"/><rect x="8" y="9" width="1" height="1" fill="#000000"/><rect x="10" y="9" width="1" height="1" fill="#000000"/><rect x="11" y="9" width="1" height="1" fill="#904858"/><rect x="12" y="9" width="1" height="1" fill="#000000"/><rect x="14" y="9" width="1" height="1" fill="#000000"/><rect x="15" y="9" width="1" height="1" fill="#904858"/><rect x="16" y="9" width="1" height="1" fill="#000000"/><rect x="3" y="10" width="2" height="1" fill="#000000"/><rect x="6" y="10" width="1" height="1" fill="#000000"/><rect x="7" y="10" width="1" height="1" fill="#904858"/><rect x="8" y="10" width="1" height="1" fill="#000000"/><rect x="10" y="10" width="1" height="1" fill="#000000"/><rect x="11" y="10" width="1" height="1" fill="#904858"/><rect x="12" y="10" width="1" height="1" fill="#000000"/><rect x="14" y="10" width="1" height="1" fill="#000000"/><rect x="15" y="10" width="1" height="1" fill="#904858"/><rect x="16" y="10" width="1" height="1" fill="#000000"/><rect x="4" y="11" width="1" height="1" fill="#000000"/><rect x="6" y="11" width="1" height="1" fill="#000000"/><rect x="7" y="11" width="1" height="1" fill="#904858"/><rect x="8" y="11" width="1" height="1" fill="#000000"/><rect x="10" y="11" width="1" height="1" fill="#000000"/><rect x="11" y="11" width="1" height="1" fill="#904858"/><rect x="12" y="11" width="1" height="1" fill="#000000"/><rect x="14" y="11" width="1" height="1" fill="#000000"/><rect x="15" y="11" width="1" height="1" fill="#904858"/><rect x="16" y="11" width="1" height="1" fill="#000000"/><rect x="3" y="12" width="2" height="1" fill="#000000"/><rect x="6" y="12" width="1" height="1" fill="#000000"/><rect x="7" y="12" width="1" height="1" fill="#904858"/><rect x="8" y="12" width="1" height="1" fill="#000000"/><rect x="10" y="12" width="1" height="1" fill="#000000"/><rect x="11" y="12" width="1" height="1" fill="#904858"/><rect x="12" y="12" width="1" height="1" fill="#000000"/><rect x="14" y="12" width="1" height="1" fill="#000000"/><rect x="15" y="12" width="1" height="1" fill="#904858"/><rect x="16" y="12" width="1" height="1" fill="#000000"/><rect x="4" y="13" width="1" height="1" fill="#000000"/><rect x="6" y="13" width="1" height="1" fill="#000000"/><rect x="7" y="13" width="1" height="1" fill="#904858"/><rect x="8" y="13" width="1" height="1" fill="#000000"/><rect x="10" y="13" width="1" height="1" fill="#000000"/><rect x="11" y="13" width="1" height="1" fill="#904858"/><rect x="12" y="13" width="1" height="1" fill="#000000"/><rect x="14" y="13" width="1" height="1" fill="#000000"/><rect x="15" y="13" width="1" height="1" fill="#904858"/><rect x="16" y="13" width="1" height="1" fill="#000000"/><rect x="4" y="14" width="1" height="1" fill="#000000"/><rect x="6" y="14" width="3" height="1" fill="#000000"/><rect x="10" y="14" width="3" height="1" fill="#000000"/><rect x="14" y="14" width="3" height="1" fill="#000000"/><rect x="4" y="15" width="14" height="1" fill="#000000"/><rect x="7" y="16" width="1" height="1" fill="#000000"/><rect x="11" y="16" width="1" height="1" fill="#000000"/><rect x="15" y="16" width="1" height="1" fill="#000000"/></svg>
<span class="t" style="left:28px;top:382px;color:#000;font-weight:normal;letter-spacing:-0.336px;font-size:11px;">Pauzy</span>
<svg style="position:absolute;left:7px;top:378px" width="19" height="17" shape-rendering="crispEdges"><rect x="13" y="2" width="1" height="1" fill="#000000"/><rect x="10" y="3" width="5" height="1" fill="#000000"/><rect x="8" y="4" width="2" height="1" fill="#000000"/><rect x="10" y="4" width="4" height="1" fill="#ffffff"/><rect x="14" y="4" width="1" height="1" fill="#000000"/><rect x="6" y="5" width="2" height="1" fill="#000000"/><rect x="8" y="5" width="2" height="1" fill="#ffffff"/><rect x="10" y="5" width="1" height="1" fill="#d02020"/><rect x="11" y="5" width="3" height="1" fill="#ffffff"/><rect x="14" y="5" width="2" height="1" fill="#000000"/><rect x="4" y="6" width="2" height="1" fill="#000000"/><rect x="6" y="6" width="2" height="1" fill="#203080"/><rect x="8" y="6" width="1" height="1" fill="#ffffff"/><rect x="9" y="6" width="2" height="1" fill="#d02020"/><rect x="11" y="6" width="4" height="1" fill="#ffffff"/><rect x="15" y="6" width="1" height="1" fill="#000000"/><rect x="2" y="7" width="2" height="1" fill="#000000"/><rect x="4" y="7" width="3" height="1" fill="#203080"/><rect x="7" y="7" width="4" height="1" fill="#d02020"/><rect x="11" y="7" width="4" height="1" fill="#ffffff"/><rect x="15" y="7" width="1" height="1" fill="#000000"/><rect x="2" y="8" width="1" height="1" fill="#000000"/><rect x="3" y="8" width="2" height="1" fill="#203080"/><rect x="5" y="8" width="1" height="1" fill="#ffffff"/><rect x="6" y="8" width="7" height="1" fill="#d02020"/><rect x="13" y="8" width="3" height="1" fill="#ffffff"/><rect x="16" y="8" width="1" height="1" fill="#000000"/><rect x="3" y="9" width="1" height="1" fill="#000000"/><rect x="4" y="9" width="2" height="1" fill="#ffffff"/><rect x="6" y="9" width="8" height="1" fill="#d02020"/><rect x="14" y="9" width="2" height="1" fill="#ffffff"/><rect x="16" y="9" width="1" height="1" fill="#000000"/><rect x="3" y="10" width="1" height="1" fill="#000000"/><rect x="4" y="10" width="3" height="1" fill="#ffffff"/><rect x="7" y="10" width="6" height="1" fill="#d02020"/><rect x="13" y="10" width="3" height="1" fill="#ffffff"/><rect x="16" y="10" width="2" height="1" fill="#000000"/><rect x="4" y="11" width="1" height="1" fill="#000000"/><rect x="5" y="11" width="1" height="1" fill="#ffffff"/><rect x="6" y="11" width="3" height="1" fill="#d02020"/><rect x="9" y="11" width="2" height="1" fill="#ffffff"/><rect x="11" y="11" width="2" height="1" fill="#d02020"/><rect x="13" y="11" width="1" height="1" fill="#ffffff"/><rect x="14" y="11" width="3" height="1" fill="#000000"/><rect x="4" y="12" width="1" height="1" fill="#000000"/><rect x="5" y="12" width="2" height="1" fill="#ffffff"/><rect x="7" y="12" width="1" height="1" fill="#d02020"/><rect x="8" y="12" width="4" height="1" fill="#ffffff"/><rect x="12" y="12" width="3" height="1" fill="#000000"/><rect x="5" y="13" width="1" height="1" fill="#000000"/><rect x="6" y="13" width="4" height="1" fill="#ffffff"/><rect x="10" y="13" width="3" height="1" fill="#000000"/><rect x="5" y="14" width="1" height="1" fill="#000000"/><rect x="6" y="14" width="2" height="1" fill="#ffffff"/><rect x="8" y="14" width="3" height="1" fill="#000000"/><rect x="6" y="15" width="3" height="1" fill="#000000"/><rect x="6" y="16" width="1" height="1" fill="#000000"/></svg>
<span class="t" style="left:28px;top:404px;color:#000;font-weight:normal;letter-spacing:-0.194px;font-size:11px;">Prav. jízdy</span>
<svg style="position:absolute;left:7px;top:400px" width="19" height="16" shape-rendering="crispEdges"><rect x="9" y="3" width="2" height="1" fill="#203080"/><rect x="13" y="3" width="2" height="1" fill="#000000"/><rect x="6" y="4" width="2" height="1" fill="#ffffff"/><rect x="8" y="4" width="3" height="1" fill="#203080"/><rect x="11" y="4" width="2" height="1" fill="#000000"/><rect x="13" y="4" width="2" height="1" fill="#e8e890"/><rect x="15" y="4" width="1" height="1" fill="#000000"/><rect x="2" y="5" width="1" height="1" fill="#000000"/><rect x="5" y="5" width="1" height="1" fill="#ffffff"/><rect x="6" y="5" width="2" height="1" fill="#e8e890"/><rect x="8" y="5" width="2" height="1" fill="#203080"/><rect x="10" y="5" width="1" height="1" fill="#000000"/><rect x="11" y="5" width="2" height="1" fill="#e8e890"/><rect x="13" y="5" width="1" height="1" fill="#ffffff"/><rect x="14" y="5" width="2" height="1" fill="#e8e890"/><rect x="16" y="5" width="1" height="1" fill="#000000"/><rect x="2" y="6" width="2" height="1" fill="#000000"/><rect x="4" y="6" width="4" height="1" fill="#e8e890"/><rect x="8" y="6" width="1" height="1" fill="#000000"/><rect x="9" y="6" width="1" height="1" fill="#203080"/><rect x="10" y="6" width="1" height="1" fill="#000000"/><rect x="11" y="6" width="3" height="1" fill="#e8e890"/><rect x="14" y="6" width="1" height="1" fill="#ffffff"/><rect x="15" y="6" width="1" height="1" fill="#e8e890"/><rect x="16" y="6" width="1" height="1" fill="#000000"/><rect x="3" y="7" width="1" height="1" fill="#000000"/><rect x="4" y="7" width="4" height="1" fill="#e8e890"/><rect x="8" y="7" width="1" height="1" fill="#000000"/><rect x="9" y="7" width="1" height="1" fill="#203080"/><rect x="10" y="7" width="1" height="1" fill="#60b040"/><rect x="11" y="7" width="2" height="1" fill="#e8e890"/><rect x="13" y="7" width="1" height="1" fill="#ffffff"/><rect x="14" y="7" width="2" height="1" fill="#e8e890"/><rect x="16" y="7" width="1" height="1" fill="#000000"/><rect x="2" y="8" width="1" height="1" fill="#000000"/><rect x="3" y="8" width="4" height="1" fill="#e8e890"/><rect x="7" y="8" width="1" height="1" fill="#000000"/><rect x="8" y="8" width="3" height="1" fill="#60b040"/><rect x="11" y="8" width="4" height="1" fill="#e8e890"/><rect x="15" y="8" width="1" height="1" fill="#000000"/><rect x="2" y="9" width="1" height="1" fill="#000000"/><rect x="3" y="9" width="4" height="1" fill="#e8e890"/><rect x="7" y="9" width="3" height="1" fill="#60b040"/><rect x="10" y="9" width="5" height="1" fill="#e8e890"/><rect x="15" y="9" width="1" height="1" fill="#000000"/><rect x="2" y="10" width="1" height="1" fill="#000000"/><rect x="3" y="10" width="2" height="1" fill="#e8e890"/><rect x="5" y="10" width="2" height="1" fill="#000000"/><rect x="7" y="10" width="2" height="1" fill="#60b040"/><rect x="9" y="10" width="1" height="1" fill="#203080"/><rect x="10" y="10" width="3" height="1" fill="#e8e890"/><rect x="13" y="10" width="3" height="1" fill="#000000"/><rect x="2" y="11" width="1" height="1" fill="#000000"/><rect x="3" y="11" width="1" height="1" fill="#ffffff"/><rect x="4" y="11" width="1" height="1" fill="#000000"/><rect x="5" y="11" width="6" height="1" fill="#203080"/><rect x="11" y="11" width="4" height="1" fill="#000000"/><rect x="2" y="12" width="4" height="1" fill="#000000"/><rect x="6" y="12" width="4" height="1" fill="#203080"/><rect x="10" y="12" width="3" height="1" fill="#000000"/><rect x="3" y="13" width="9" height="1" fill="#000000"/><rect x="4" y="14" width="2" height="1" fill="#000000"/><rect x="8" y="14" width="3" height="1" fill="#000000"/><rect x="4" y="15" width="2" height="1" fill="#000000"/></svg>
<span class="t" style="left:28px;top:426px;color:#000;font-weight:normal;letter-spacing:-0.489px;font-size:11px;">Rekonstrukce</span>
<svg style="position:absolute;left:7px;top:422px" width="19" height="17" shape-rendering="crispEdges"><rect x="4" y="2" width="1" height="1" fill="#000000"/><rect x="2" y="3" width="6" height="1" fill="#000000"/><rect x="2" y="4" width="1" height="1" fill="#000000"/><rect x="3" y="4" width="2" height="1" fill="#ffffff"/><rect x="5" y="4" width="1" height="1" fill="#000000"/><rect x="6" y="4" width="2" height="1" fill="#ffffff"/><rect x="8" y="4" width="8" height="1" fill="#000000"/><rect x="2" y="5" width="1" height="1" fill="#000000"/><rect x="3" y="5" width="2" height="1" fill="#ffffff"/><rect x="5" y="5" width="1" height="1" fill="#000000"/><rect x="6" y="5" width="2" height="1" fill="#ffffff"/><rect x="8" y="5" width="1" height="1" fill="#000000"/><rect x="9" y="5" width="6" height="1" fill="#ffffff"/><rect x="15" y="5" width="1" height="1" fill="#000000"/><rect x="2" y="6" width="1" height="1" fill="#000000"/><rect x="3" y="6" width="2" height="1" fill="#ffffff"/><rect x="5" y="6" width="1" height="1" fill="#000000"/><rect x="6" y="6" width="2" height="1" fill="#ffffff"/><rect x="8" y="6" width="1" height="1" fill="#000000"/><rect x="9" y="6" width="1" height="1" fill="#ffffff"/><rect x="10" y="6" width="4" height="1" fill="#000000"/><rect x="14" y="6" width="1" height="1" fill="#ffffff"/><rect x="15" y="6" width="1" height="1" fill="#000000"/><rect x="2" y="7" width="1" height="1" fill="#000000"/><rect x="3" y="7" width="2" height="1" fill="#ffffff"/><rect x="5" y="7" width="1" height="1" fill="#000000"/><rect x="6" y="7" width="2" height="1" fill="#ffffff"/><rect x="8" y="7" width="1" height="1" fill="#000000"/><rect x="9" y="7" width="1" height="1" fill="#ffffff"/><rect x="10" y="7" width="1" height="1" fill="#000000"/><rect x="11" y="7" width="2" height="1" fill="#d02020"/><rect x="13" y="7" width="1" height="1" fill="#000000"/><rect x="14" y="7" width="1" height="1" fill="#ffffff"/><rect x="15" y="7" width="1" height="1" fill="#000000"/><rect x="2" y="8" width="1" height="1" fill="#000000"/><rect x="3" y="8" width="2" height="1" fill="#ffffff"/><rect x="5" y="8" width="1" height="1" fill="#000000"/><rect x="6" y="8" width="2" height="1" fill="#ffffff"/><rect x="8" y="8" width="2" height="1" fill="#000000"/><rect x="10" y="8" width="4" height="1" fill="#d02020"/><rect x="14" y="8" width="2" height="1" fill="#000000"/><rect x="2" y="9" width="1" height="1" fill="#000000"/><rect x="3" y="9" width="2" height="1" fill="#ffffff"/><rect x="5" y="9" width="1" height="1" fill="#000000"/><rect x="6" y="9" width="2" height="1" fill="#ffffff"/><rect x="8" y="9" width="2" height="1" fill="#000000"/><rect x="10" y="9" width="4" height="1" fill="#d02020"/><rect x="14" y="9" width="1" height="1" fill="#000000"/><rect x="2" y="10" width="7" height="1" fill="#000000"/><rect x="9" y="10" width="7" height="1" fill="#d02020"/><rect x="16" y="10" width="1" height="1" fill="#000000"/><rect x="4" y="11" width="4" height="1" fill="#000000"/><rect x="8" y="11" width="8" height="1" fill="#d02020"/><rect x="16" y="11" width="1" height="1" fill="#000000"/><rect x="8" y="12" width="1" height="1" fill="#000000"/><rect x="9" y="12" width="7" height="1" fill="#d02020"/><rect x="16" y="12" width="1" height="1" fill="#000000"/><rect x="8" y="13" width="2" height="1" fill="#000000"/><rect x="10" y="13" width="4" height="1" fill="#d02020"/><rect x="14" y="13" width="3" height="1" fill="#000000"/><rect x="10" y="14" width="1" height="1" fill="#000000"/><rect x="11" y="14" width="3" height="1" fill="#d02020"/><rect x="14" y="14" width="1" height="1" fill="#000000"/><rect x="10" y="15" width="1" height="1" fill="#000000"/><rect x="11" y="15" width="3" height="1" fill="#d02020"/><rect x="14" y="15" width="1" height="1" fill="#000000"/><rect x="10" y="16" width="5" height="1" fill="#000000"/></svg>
<span class="t" style="left:28px;top:448px;color:#000;font-weight:normal;letter-spacing:-0.273px;font-size:11px;">Tisk knihy j.</span>
<svg style="position:absolute;left:9px;top:446px" width="16" height="15" shape-rendering="crispEdges"><rect x="10" y="2" width="3" height="1" fill="#000000"/><rect x="9" y="3" width="1" height="1" fill="#000000"/><rect x="10" y="3" width="3" height="1" fill="#ffffff"/><rect x="13" y="3" width="1" height="1" fill="#000000"/><rect x="8" y="4" width="1" height="1" fill="#000000"/><rect x="9" y="4" width="4" height="1" fill="#ffffff"/><rect x="13" y="4" width="2" height="1" fill="#000000"/><rect x="3" y="5" width="5" height="1" fill="#000000"/><rect x="8" y="5" width="4" height="1" fill="#ffffff"/><rect x="12" y="5" width="1" height="1" fill="#000000"/><rect x="1" y="6" width="2" height="1" fill="#000000"/><rect x="3" y="6" width="3" height="1" fill="#c0c0c0"/><rect x="6" y="6" width="1" height="1" fill="#ffffff"/><rect x="7" y="6" width="1" height="1" fill="#000000"/><rect x="8" y="6" width="3" height="1" fill="#ffffff"/><rect x="11" y="6" width="1" height="1" fill="#000000"/><rect x="0" y="7" width="1" height="1" fill="#000000"/><rect x="1" y="7" width="2" height="1" fill="#ffffff"/><rect x="3" y="7" width="3" height="1" fill="#c0c0c0"/><rect x="6" y="7" width="2" height="1" fill="#000000"/><rect x="8" y="7" width="2" height="1" fill="#ffffff"/><rect x="10" y="7" width="2" height="1" fill="#000000"/><rect x="13" y="7" width="1" height="1" fill="#000000"/><rect x="0" y="8" width="1" height="1" fill="#000000"/><rect x="1" y="8" width="1" height="1" fill="#ffffff"/><rect x="2" y="8" width="4" height="1" fill="#c0c0c0"/><rect x="6" y="8" width="1" height="1" fill="#000000"/><rect x="7" y="8" width="2" height="1" fill="#808080"/><rect x="9" y="8" width="4" height="1" fill="#c0c0c0"/><rect x="13" y="8" width="1" height="1" fill="#000000"/><rect x="0" y="9" width="1" height="1" fill="#000000"/><rect x="1" y="9" width="2" height="1" fill="#ffffff"/><rect x="3" y="9" width="3" height="1" fill="#c0c0c0"/><rect x="6" y="9" width="5" height="1" fill="#808080"/><rect x="11" y="9" width="2" height="1" fill="#c0c0c0"/><rect x="13" y="9" width="1" height="1" fill="#000000"/><rect x="0" y="10" width="1" height="1" fill="#000000"/><rect x="1" y="10" width="3" height="1" fill="#ffffff"/><rect x="4" y="10" width="4" height="1" fill="#c0c0c0"/><rect x="8" y="10" width="3" height="1" fill="#808080"/><rect x="11" y="10" width="2" height="1" fill="#c0c0c0"/><rect x="13" y="10" width="1" height="1" fill="#000000"/><rect x="1" y="11" width="2" height="1" fill="#000000"/><rect x="3" y="11" width="3" height="1" fill="#ffffff"/><rect x="6" y="11" width="4" height="1" fill="#c0c0c0"/><rect x="10" y="11" width="2" height="1" fill="#808080"/><rect x="12" y="11" width="2" height="1" fill="#000000"/><rect x="2" y="12" width="3" height="1" fill="#000000"/><rect x="5" y="12" width="2" height="1" fill="#ffffff"/><rect x="7" y="12" width="2" height="1" fill="#c0c0c0"/><rect x="9" y="12" width="4" height="1" fill="#000000"/><rect x="3" y="13" width="8" height="1" fill="#000000"/><rect x="5" y="14" width="4" height="1" fill="#000000"/></svg>
<span class="t" style="left:28px;top:470px;color:#000;font-weight:normal;letter-spacing:0.166px;font-size:11px;">Přepočítat</span>
<svg style="position:absolute;left:7px;top:466px" width="19" height="16" shape-rendering="crispEdges"><rect x="8" y="2" width="1" height="1" fill="#000000"/><rect x="7" y="3" width="3" height="1" fill="#000000"/><rect x="6" y="4" width="2" height="1" fill="#000000"/><rect x="8" y="4" width="1" height="1" fill="#ffffff"/><rect x="9" y="4" width="2" height="1" fill="#000000"/><rect x="5" y="5" width="2" height="1" fill="#000000"/><rect x="7" y="5" width="1" height="1" fill="#ffffff"/><rect x="8" y="5" width="4" height="1" fill="#000000"/><rect x="4" y="6" width="2" height="1" fill="#000000"/><rect x="6" y="6" width="1" height="1" fill="#ffffff"/><rect x="7" y="6" width="1" height="1" fill="#000000"/><rect x="8" y="6" width="3" height="1" fill="#ffffff"/><rect x="11" y="6" width="2" height="1" fill="#000000"/><rect x="3" y="7" width="2" height="1" fill="#000000"/><rect x="5" y="7" width="1" height="1" fill="#ffffff"/><rect x="6" y="7" width="1" height="1" fill="#000000"/><rect x="7" y="7" width="2" height="1" fill="#ffffff"/><rect x="9" y="7" width="1" height="1" fill="#c0c0c0"/><rect x="10" y="7" width="2" height="1" fill="#ffffff"/><rect x="12" y="7" width="2" height="1" fill="#000000"/><rect x="3" y="8" width="3" height="1" fill="#000000"/><rect x="6" y="8" width="2" height="1" fill="#ffffff"/><rect x="8" y="8" width="1" height="1" fill="#c0c0c0"/><rect x="9" y="8" width="1" height="1" fill="#ffffff"/><rect x="10" y="8" width="1" height="1" fill="#c0c0c0"/><rect x="11" y="8" width="2" height="1" fill="#ffffff"/><rect x="13" y="8" width="2" height="1" fill="#000000"/><rect x="4" y="9" width="2" height="1" fill="#000000"/><rect x="6" y="9" width="1" height="1" fill="#ffffff"/><rect x="7" y="9" width="1" height="1" fill="#c0c0c0"/><rect x="8" y="9" width="1" height="1" fill="#ffffff"/><rect x="9" y="9" width="1" height="1" fill="#c0c0c0"/><rect x="10" y="9" width="1" height="1" fill="#ffffff"/><rect x="11" y="9" width="1" height="1" fill="#c0c0c0"/><rect x="12" y="9" width="2" height="1" fill="#ffffff"/><rect x="14" y="9" width="2" height="1" fill="#000000"/><rect x="5" y="10" width="1" height="1" fill="#000000"/><rect x="6" y="10" width="2" height="1" fill="#ffffff"/><rect x="8" y="10" width="1" height="1" fill="#c0c0c0"/><rect x="9" y="10" width="1" height="1" fill="#ffffff"/><rect x="10" y="10" width="1" height="1" fill="#c0c0c0"/><rect x="11" y="10" width="1" height="1" fill="#ffffff"/><rect x="12" y="10" width="1" height="1" fill="#c0c0c0"/><rect x="13" y="10" width="2" height="1" fill="#ffffff"/><rect x="15" y="10" width="2" height="1" fill="#000000"/><rect x="6" y="11" width="1" height="1" fill="#000000"/><rect x="7" y="11" width="2" height="1" fill="#ffffff"/><rect x="9" y="11" width="1" height="1" fill="#c0c0c0"/><rect x="10" y="11" width="1" height="1" fill="#ffffff"/><rect x="11" y="11" width="1" height="1" fill="#c0c0c0"/><rect x="12" y="11" width="2" height="1" fill="#ffffff"/><rect x="14" y="11" width="2" height="1" fill="#000000"/><rect x="7" y="12" width="1" height="1" fill="#000000"/><rect x="8" y="12" width="2" height="1" fill="#ffffff"/><rect x="10" y="12" width="1" height="1" fill="#c0c0c0"/><rect x="11" y="12" width="2" height="1" fill="#ffffff"/><rect x="13" y="12" width="2" height="1" fill="#000000"/><rect x="8" y="13" width="1" height="1" fill="#000000"/><rect x="9" y="13" width="3" height="1" fill="#ffffff"/><rect x="12" y="13" width="2" height="1" fill="#000000"/><rect x="9" y="14" width="1" height="1" fill="#000000"/><rect x="10" y="14" width="1" height="1" fill="#ffffff"/><rect x="11" y="14" width="2" height="1" fill="#000000"/><rect x="10" y="15" width="2" height="1" fill="#000000"/></svg>
<span class="t" style="left:28px;top:492px;color:#000;font-weight:normal;letter-spacing:0.004px;font-size:11px;">Plánovač</span>
<svg style="position:absolute;left:7px;top:488px" width="19" height="17" shape-rendering="crispEdges"><rect x="3" y="2" width="14" height="1" fill="#000000"/><rect x="3" y="3" width="2" height="1" fill="#000000"/><rect x="5" y="3" width="1" height="1" fill="#ffffff"/><rect x="6" y="3" width="1" height="1" fill="#000000"/><rect x="7" y="3" width="1" height="1" fill="#ffffff"/><rect x="8" y="3" width="1" height="1" fill="#000000"/><rect x="9" y="3" width="1" height="1" fill="#ffffff"/><rect x="10" y="3" width="1" height="1" fill="#000000"/><rect x="11" y="3" width="1" height="1" fill="#ffffff"/><rect x="12" y="3" width="1" height="1" fill="#000000"/><rect x="13" y="3" width="1" height="1" fill="#ffffff"/><rect x="14" y="3" width="1" height="1" fill="#000000"/><rect x="15" y="3" width="1" height="1" fill="#ffffff"/><rect x="16" y="3" width="1" height="1" fill="#000000"/><rect x="3" y="4" width="1" height="1" fill="#000000"/><rect x="4" y="4" width="12" height="1" fill="#ffffff"/><rect x="16" y="4" width="2" height="1" fill="#000000"/><rect x="3" y="5" width="1" height="1" fill="#000000"/><rect x="4" y="5" width="12" height="1" fill="#ffffff"/><rect x="16" y="5" width="2" height="1" fill="#000000"/><rect x="3" y="6" width="1" height="1" fill="#000000"/><rect x="4" y="6" width="1" height="1" fill="#ffffff"/><rect x="5" y="6" width="2" height="1" fill="#904858"/><rect x="7" y="6" width="1" height="1" fill="#ffffff"/><rect x="8" y="6" width="1" height="1" fill="#000000"/><rect x="9" y="6" width="1" height="1" fill="#ffffff"/><rect x="10" y="6" width="6" height="1" fill="#808030"/><rect x="16" y="6" width="1" height="1" fill="#ffffff"/><rect x="17" y="6" width="1" height="1" fill="#000000"/><rect x="3" y="7" width="1" height="1" fill="#000000"/><rect x="4" y="7" width="5" height="1" fill="#ffffff"/><rect x="9" y="7" width="2" height="1" fill="#808030"/><rect x="11" y="7" width="4" height="1" fill="#e8e890"/><rect x="15" y="7" width="1" height="1" fill="#808030"/><rect x="16" y="7" width="1" height="1" fill="#ffffff"/><rect x="17" y="7" width="1" height="1" fill="#000000"/><rect x="3" y="8" width="1" height="1" fill="#000000"/><rect x="4" y="8" width="1" height="1" fill="#ffffff"/><rect x="5" y="8" width="1" height="1" fill="#000000"/><rect x="6" y="8" width="1" height="1" fill="#ffffff"/><rect x="7" y="8" width="2" height="1" fill="#000000"/><rect x="9" y="8" width="1" height="1" fill="#808030"/><rect x="10" y="8" width="6" height="1" fill="#e8e890"/><rect x="16" y="8" width="1" height="1" fill="#808030"/><rect x="17" y="8" width="1" height="1" fill="#000000"/><rect x="3" y="9" width="1" height="1" fill="#000000"/><rect x="4" y="9" width="4" height="1" fill="#ffffff"/><rect x="8" y="9" width="1" height="1" fill="#808030"/><rect x="9" y="9" width="2" height="1" fill="#e8e890"/><rect x="11" y="9" width="2" height="1" fill="#ffffff"/><rect x="13" y="9" width="1" height="1" fill="#000000"/><rect x="14" y="9" width="2" height="1" fill="#ffffff"/><rect x="16" y="9" width="1" height="1" fill="#e8e890"/><rect x="17" y="9" width="1" height="1" fill="#000000"/><rect x="3" y="10" width="1" height="1" fill="#000000"/><rect x="4" y="10" width="1" height="1" fill="#ffffff"/><rect x="5" y="10" width="1" height="1" fill="#000000"/><rect x="6" y="10" width="1" height="1" fill="#ffffff"/><rect x="7" y="10" width="1" height="1" fill="#808030"/><rect x="8" y="10" width="2" height="1" fill="#e8e890"/><rect x="10" y="10" width="3" height="1" fill="#ffffff"/><rect x="13" y="10" width="1" height="1" fill="#000000"/><rect x="14" y="10" width="2" height="1" fill="#ffffff"/><rect x="16" y="10" width="1" height="1" fill="#e8e890"/><rect x="17" y="10" width="1" height="1" fill="#000000"/><rect x="3" y="11" width="1" height="1" fill="#000000"/><rect x="4" y="11" width="3" height="1" fill="#ffffff"/><rect x="7" y="11" width="1" height="1" fill="#808030"/><rect x="8" y="11" width="2" height="1" fill="#e8e890"/><rect x="10" y="11" width="3" height="1" fill="#ffffff"/><rect x="13" y="11" width="1" height="1" fill="#000000"/><rect x="14" y="11" width="2" height="1" fill="#ffffff"/><rect x="16" y="11" width="1" height="1" fill="#e8e890"/><rect x="17" y="11" width="1" height="1" fill="#000000"/><rect x="3" y="12" width="1" height="1" fill="#000000"/><rect x="4" y="12" width="1" height="1" fill="#ffffff"/><rect x="5" y="12" width="1" height="1" fill="#000000"/><rect x="6" y="12" width="1" height="1" fill="#ffffff"/><rect x="7" y="12" width="1" height="1" fill="#808030"/><rect x="8" y="12" width="2" height="1" fill="#e8e890"/><rect x="10" y="12" width="4" height="1" fill="#ffffff"/><rect x="14" y="12" width="1" height="1" fill="#000000"/><rect x="15" y="12" width="1" height="1" fill="#ffffff"/><rect x="16" y="12" width="1" height="1" fill="#e8e890"/><rect x="17" y="12" width="1" height="1" fill="#000000"/><rect x="3" y="13" width="1" height="1" fill="#000000"/><rect x="4" y="13" width="3" height="1" fill="#ffffff"/><rect x="7" y="13" width="1" height="1" fill="#808030"/><rect x="8" y="13" width="2" height="1" fill="#e8e890"/><rect x="10" y="13" width="5" height="1" fill="#ffffff"/><rect x="15" y="13" width="2" height="1" fill="#e8e890"/><rect x="17" y="13" width="1" height="1" fill="#000000"/><rect x="3" y="14" width="5" height="1" fill="#000000"/><rect x="8" y="14" width="1" height="1" fill="#808030"/><rect x="9" y="14" width="2" height="1" fill="#e8e890"/><rect x="11" y="14" width="4" height="1" fill="#ffffff"/><rect x="15" y="14" width="2" height="1" fill="#e8e890"/><rect x="17" y="14" width="2" height="1" fill="#000000"/><rect x="3" y="15" width="6" height="1" fill="#000000"/><rect x="9" y="15" width="1" height="1" fill="#808030"/><rect x="10" y="15" width="6" height="1" fill="#e8e890"/><rect x="16" y="15" width="2" height="1" fill="#000000"/><rect x="10" y="16" width="5" height="1" fill="#000000"/></svg>
<span class="t" style="left:28px;top:514px;color:#000;font-weight:normal;letter-spacing:-0.102px;font-size:11px;">Mapy</span>
<svg style="position:absolute;left:7px;top:510px" width="19" height="15" shape-rendering="crispEdges"><rect x="6" y="4" width="4" height="1" fill="#000000"/><rect x="5" y="5" width="1" height="1" fill="#000000"/><rect x="6" y="5" width="4" height="1" fill="#ffffff"/><rect x="10" y="5" width="2" height="1" fill="#000000"/><rect x="3" y="6" width="2" height="1" fill="#000000"/><rect x="5" y="6" width="2" height="1" fill="#ffffff"/><rect x="7" y="6" width="1" height="1" fill="#c0c0c0"/><rect x="8" y="6" width="4" height="1" fill="#ffffff"/><rect x="12" y="6" width="3" height="1" fill="#000000"/><rect x="2" y="7" width="1" height="1" fill="#000000"/><rect x="3" y="7" width="5" height="1" fill="#ffffff"/><rect x="8" y="7" width="1" height="1" fill="#c0c0c0"/><rect x="9" y="7" width="2" height="1" fill="#ffffff"/><rect x="11" y="7" width="1" height="1" fill="#000000"/><rect x="12" y="7" width="3" height="1" fill="#ffffff"/><rect x="15" y="7" width="1" height="1" fill="#000000"/><rect x="2" y="8" width="1" height="1" fill="#000000"/><rect x="3" y="8" width="2" height="1" fill="#ffffff"/><rect x="5" y="8" width="1" height="1" fill="#c0c0c0"/><rect x="6" y="8" width="3" height="1" fill="#ffffff"/><rect x="9" y="8" width="1" height="1" fill="#c0c0c0"/><rect x="10" y="8" width="6" height="1" fill="#ffffff"/><rect x="16" y="8" width="1" height="1" fill="#000000"/><rect x="2" y="9" width="1" height="1" fill="#000000"/><rect x="3" y="9" width="2" height="1" fill="#ffffff"/><rect x="5" y="9" width="3" height="1" fill="#c0c0c0"/><rect x="8" y="9" width="2" height="1" fill="#ffffff"/><rect x="10" y="9" width="1" height="1" fill="#c0c0c0"/><rect x="11" y="9" width="2" height="1" fill="#ffffff"/><rect x="13" y="9" width="1" height="1" fill="#c0c0c0"/><rect x="14" y="9" width="2" height="1" fill="#ffffff"/><rect x="16" y="9" width="1" height="1" fill="#000000"/><rect x="2" y="10" width="1" height="1" fill="#000000"/><rect x="3" y="10" width="3" height="1" fill="#ffffff"/><rect x="6" y="10" width="1" height="1" fill="#c0c0c0"/><rect x="7" y="10" width="3" height="1" fill="#ffffff"/><rect x="10" y="10" width="1" height="1" fill="#c0c0c0"/><rect x="11" y="10" width="1" height="1" fill="#ffffff"/><rect x="12" y="10" width="1" height="1" fill="#c0c0c0"/><rect x="13" y="10" width="3" height="1" fill="#ffffff"/><rect x="16" y="10" width="1" height="1" fill="#000000"/><rect x="3" y="11" width="1" height="1" fill="#000000"/><rect x="4" y="11" width="3" height="1" fill="#ffffff"/><rect x="7" y="11" width="1" height="1" fill="#c0c0c0"/><rect x="8" y="11" width="7" height="1" fill="#ffffff"/><rect x="15" y="11" width="1" height="1" fill="#000000"/><rect x="3" y="12" width="2" height="1" fill="#000000"/><rect x="5" y="12" width="9" height="1" fill="#ffffff"/><rect x="14" y="12" width="1" height="1" fill="#000000"/><rect x="5" y="13" width="2" height="1" fill="#000000"/><rect x="7" y="13" width="5" height="1" fill="#ffffff"/><rect x="12" y="13" width="3" height="1" fill="#000000"/><rect x="7" y="14" width="5" height="1" fill="#000000"/></svg>
<svg style="position:absolute;left:75px;top:362px" width="6" height="8"><path d="M1 1 L4 4 L1 7Z" fill="#000"/></svg>
<div style="left:99px;top:67px;width:735px;height:475px;background:#808080;box-shadow:inset -1px -1px #ffffff,inset 1px 1px #808080,inset -2px -2px #d4d0c8,inset 2px 2px #404040"></div>
<span class="t" style="left:9px;top:545px;color:#000;font-weight:normal;letter-spacing:-0.15px;font-size:11px;">2012</span>
<div style="left:40px;top:544px;width:199px;height:15px;box-shadow:inset 1px 1px #808080,inset -1px -1px #ffffff"></div>
<span class="t" style="left:44px;top:545px;color:#000;font-weight:normal;letter-spacing:-0.15px;font-size:11px;">2A4 42-45&nbsp; Škoda Fabia</span>
<div style="left:241px;top:544px;width:65px;height:15px;box-shadow:inset 1px 1px #808080,inset -1px -1px #ffffff"></div>
<span class="t" style="left:259px;top:545px;color:#000;font-weight:normal;letter-spacing:-0.15px;font-size:11px;">42824</span>
<div style="left:309px;top:544px;width:133px;height:15px;box-shadow:inset 1px 1px #808080,inset -1px -1px #ffffff"></div>
<span class="t" style="left:313px;top:545px;color:#000;font-weight:normal;letter-spacing:-0.15px;font-size:11px;">Novák Jiří</span>
<div style="left:444px;top:544px;width:131px;height:15px;box-shadow:inset 1px 1px #808080,inset -1px -1px #ffffff"></div>
<span class="t" style="left:447px;top:545px;color:#000;font-weight:normal;letter-spacing:-0.15px;font-size:11px;">Administrátor</span>
<div style="left:577px;top:544px;width:240px;height:15px;box-shadow:inset 1px 1px #808080,inset -1px -1px #ffffff"></div>
<span class="t" style="left:581px;top:545px;color:#000;font-weight:normal;letter-spacing:-0.15px;font-size:11px;">Novák s.r.o.;&nbsp; plátce DPH</span>
<svg style="position:absolute;left:822px;top:547px" width="11" height="10" shape-rendering="crispEdges"><rect x="8" y="1" width="1" height="1" fill="#ffffff"/><rect x="9" y="1" width="1" height="1" fill="#808080"/><rect x="7" y="2" width="1" height="1" fill="#ffffff"/><rect x="8" y="2" width="2" height="1" fill="#808080"/><rect x="6" y="3" width="1" height="1" fill="#ffffff"/><rect x="7" y="3" width="2" height="1" fill="#808080"/><rect x="5" y="4" width="1" height="1" fill="#ffffff"/><rect x="6" y="4" width="2" height="1" fill="#808080"/><rect x="9" y="4" width="1" height="1" fill="#ffffff"/><rect x="10" y="4" width="1" height="1" fill="#808080"/><rect x="4" y="5" width="1" height="1" fill="#ffffff"/><rect x="5" y="5" width="2" height="1" fill="#808080"/><rect x="8" y="5" width="1" height="1" fill="#ffffff"/><rect x="9" y="5" width="2" height="1" fill="#808080"/><rect x="3" y="6" width="1" height="1" fill="#ffffff"/><rect x="4" y="6" width="2" height="1" fill="#808080"/><rect x="7" y="6" width="1" height="1" fill="#ffffff"/><rect x="8" y="6" width="2" height="1" fill="#808080"/><rect x="2" y="7" width="1" height="1" fill="#ffffff"/><rect x="3" y="7" width="2" height="1" fill="#808080"/><rect x="6" y="7" width="1" height="1" fill="#ffffff"/><rect x="7" y="7" width="2" height="1" fill="#808080"/><rect x="10" y="7" width="1" height="1" fill="#ffffff"/><rect x="1" y="8" width="1" height="1" fill="#ffffff"/><rect x="2" y="8" width="2" height="1" fill="#808080"/><rect x="5" y="8" width="1" height="1" fill="#ffffff"/><rect x="6" y="8" width="2" height="1" fill="#808080"/><rect x="9" y="8" width="1" height="1" fill="#ffffff"/><rect x="10" y="8" width="1" height="1" fill="#808080"/><rect x="0" y="9" width="1" height="1" fill="#ffffff"/><rect x="1" y="9" width="2" height="1" fill="#808080"/><rect x="4" y="9" width="1" height="1" fill="#ffffff"/><rect x="5" y="9" width="2" height="1" fill="#808080"/><rect x="8" y="9" width="1" height="1" fill="#ffffff"/><rect x="9" y="9" width="2" height="1" fill="#808080"/></svg>
<div style="left:112px;top:81px;width:473px;height:387px;background:#d4d0c8;box-shadow:inset -1px -1px #404040,inset 1px 1px #d4d0c8,inset -2px -2px #808080,inset 2px 2px #ffffff;"></div>
<div style="left:116px;top:85px;width:465px;height:18px;background:linear-gradient(90deg,#808080,#c0c0c0)"></div>
<svg style="position:absolute;left:120px;top:88px" width="12" height="12" shape-rendering="crispEdges"><rect x="2" y="0" width="4" height="1" fill="#000"/><rect x="6" y="0" width="2" height="1" fill="#e8e0a0"/><rect x="1" y="1" width="5" height="1" fill="#000"/><rect x="6" y="1" width="3" height="1" fill="#e8e0a0"/><rect x="0" y="2" width="4" height="1" fill="#000"/><rect x="4" y="2" width="1" height="1" fill="#fff"/><rect x="5" y="2" width="1" height="1" fill="#000"/><rect x="6" y="2" width="3" height="1" fill="#fff"/><rect x="9" y="2" width="1" height="1" fill="#000"/><rect x="0" y="3" width="3" height="1" fill="#000"/><rect x="3" y="3" width="2" height="1" fill="#fff"/><rect x="5" y="3" width="2" height="1" fill="#000"/><rect x="7" y="3" width="1" height="1" fill="#fff"/><rect x="8" y="3" width="1" height="1" fill="#000"/><rect x="0" y="4" width="3" height="1" fill="#000"/><rect x="3" y="4" width="1" height="1" fill="#fff"/><rect x="4" y="4" width="1" height="1" fill="#000"/><rect x="5" y="4" width="4" height="1" fill="#fff"/><rect x="9" y="4" width="1" height="1" fill="#000"/><rect x="1" y="5" width="2" height="1" fill="#000"/><rect x="3" y="5" width="1" height="1" fill="#fff"/><rect x="4" y="5" width="1" height="1" fill="#000"/><rect x="5" y="5" width="2" height="1" fill="#fff"/><rect x="7" y="5" width="2" height="1" fill="#000"/><rect x="1" y="6" width="2" height="1" fill="#000"/><rect x="3" y="6" width="5" height="1" fill="#fff"/><rect x="8" y="6" width="1" height="1" fill="#000"/><rect x="2" y="7" width="1" height="1" fill="#000"/><rect x="3" y="7" width="1" height="1" fill="#fff"/><rect x="4" y="7" width="2" height="1" fill="#000"/><rect x="6" y="7" width="3" height="1" fill="#fff"/><rect x="9" y="7" width="1" height="1" fill="#000"/><rect x="2" y="8" width="2" height="1" fill="#000"/><rect x="4" y="8" width="2" height="1" fill="#fff"/><rect x="6" y="8" width="1" height="1" fill="#000"/><rect x="7" y="8" width="1" height="1" fill="#fff"/><rect x="8" y="8" width="1" height="1" fill="#000"/><rect x="3" y="9" width="1" height="1" fill="#000"/><rect x="4" y="9" width="1" height="1" fill="#fff"/><rect x="5" y="9" width="2" height="1" fill="#000"/><rect x="7" y="9" width="2" height="1" fill="#fff"/><rect x="9" y="9" width="1" height="1" fill="#000"/><rect x="3" y="10" width="2" height="1" fill="#000"/><rect x="5" y="10" width="2" height="1" fill="#fff"/><rect x="7" y="10" width="2" height="1" fill="#000"/><rect x="4" y="11" width="4" height="1" fill="#000"/></svg>
<span class="t" style="left:136px;top:88px;color:#eae8e4;font-weight:bold;letter-spacing:0.45px;font-size:11px;">Seznam uživatelů a přístupová práva</span>
<div style="left:529px;top:87px;width:16px;height:14px;background:#d4d0c8;box-shadow:inset -1px -1px #404040,inset 1px 1px #ffffff,inset -2px -2px #808080,inset 2px 2px #d4d0c8;"></div>
<div style="left:545px;top:87px;width:16px;height:14px;background:#d4d0c8;box-shadow:inset -1px -1px #404040,inset 1px 1px #ffffff,inset -2px -2px #808080,inset 2px 2px #d4d0c8;"></div>
<div style="left:563px;top:87px;width:16px;height:14px;background:#d4d0c8;box-shadow:inset -1px -1px #404040,inset 1px 1px #ffffff,inset -2px -2px #808080,inset 2px 2px #d4d0c8;"></div>
<div style="left:549px;top:89px;width:9px;height:1px;background:#000"></div>
<span class="t" style="left:124px;top:121px;color:#000;font-weight:normal;letter-spacing:-0.15px;font-size:11px;">Přihlašovací jména, hesla a podrobná přístupová práva uživatelů</span>
<div style="left:124px;top:142px;width:461px;height:1px;background:#808080"></div>
<div style="left:124px;top:143px;width:461px;height:1px;background:#ffffff"></div>
<span class="t" style="left:124px;top:153px;color:#000;font-weight:normal;letter-spacing:-0.15px;font-size:11px;">Zde si můžete změnit své přihlašovací údaje. Administrátor může měnit</span>
<div style="left:124px;top:168px;width:461px;height:233px;background:#d4d0c8;border:1px solid #000;box-sizing:border-box"></div>
<div style="left:144px;top:195px;width:441px;height:181px;background:#fff"></div>
<div style="left:143px;top:168px;width:1px;height:208px;background:#000"></div>
<div style="left:219px;top:168px;width:1px;height:208px;background:#000"></div>
<div style="left:283px;top:168px;width:1px;height:208px;background:#000"></div>
<div style="left:125px;top:169px;width:18px;height:26px;box-shadow:inset 1px 1px #fff"></div>
<div style="left:144px;top:169px;width:75px;height:26px;box-shadow:inset 1px 1px #fff"></div>
<div style="left:220px;top:169px;width:63px;height:26px;box-shadow:inset 1px 1px #fff"></div>
<div style="left:284px;top:169px;width:301px;height:26px;box-shadow:inset 1px 1px #fff"></div>
<div style="left:124px;top:195px;width:461px;height:1px;background:#000"></div>
<div style="left:124px;top:210px;width:461px;height:1px;background:#000"></div>
<div style="left:124px;top:225px;width:461px;height:1px;background:#000"></div>
<div style="left:124px;top:240px;width:461px;height:1px;background:#000"></div>
<div style="left:124px;top:255px;width:461px;height:1px;background:#000"></div>
<div style="left:124px;top:270px;width:461px;height:1px;background:#000"></div>
<div style="left:124px;top:285px;width:461px;height:1px;background:#000"></div>
<div style="left:124px;top:300px;width:461px;height:1px;background:#000"></div>
<div style="left:124px;top:315px;width:461px;height:1px;background:#000"></div>
<div style="left:124px;top:330px;width:461px;height:1px;background:#000"></div>
<div style="left:124px;top:345px;width:461px;height:1px;background:#000"></div>
<div style="left:124px;top:360px;width:461px;height:1px;background:#000"></div>
<div style="left:124px;top:375px;width:461px;height:1px;background:#000"></div>
<span class="t" style="left:147px;top:170px;color:#000;font-weight:normal;letter-spacing:-0.15px;font-size:11px;">Přihlašovací</span>
<span class="t" style="left:147px;top:182px;color:#000;font-weight:normal;letter-spacing:-0.15px;font-size:11px;">jméno</span>
<span class="t" style="left:223px;top:176px;color:#000;font-weight:normal;letter-spacing:-0.15px;font-size:11px;">Heslo</span>
<span class="t" style="left:286px;top:176px;color:#000;font-weight:normal;letter-spacing:-0.15px;font-size:11px;">Příjmení, jméno</span>
<div style="left:125px;top:196px;width:18px;height:14px;background:#d4d0c8;box-shadow:inset 1px 1px #fff"></div>
<span class="t" style="left:147px;top:197px;color:#000;font-weight:normal;letter-spacing:-0.15px;font-size:11px;">admin</span>
<span class="t" style="left:286px;top:197px;color:#000;font-weight:normal;letter-spacing:-0.15px;font-size:11px;">Administrátor</span>
<svg style="position:absolute;left:223px;top:200px" width="20" height="3" shape-rendering="crispEdges"><rect x="0" y="0" width="1" height="1" fill="#000000"/><rect x="2" y="0" width="1" height="1" fill="#000000"/><rect x="4" y="0" width="1" height="1" fill="#000000"/><rect x="6" y="0" width="1" height="1" fill="#000000"/><rect x="8" y="0" width="1" height="1" fill="#000000"/><rect x="10" y="0" width="1" height="1" fill="#000000"/><rect x="12" y="0" width="1" height="1" fill="#000000"/><rect x="14" y="0" width="1" height="1" fill="#000000"/><rect x="16" y="0" width="1" height="1" fill="#000000"/><rect x="18" y="0" width="1" height="1" fill="#000000"/><rect x="1" y="1" width="1" height="1" fill="#000000"/><rect x="5" y="1" width="1" height="1" fill="#000000"/><rect x="9" y="1" width="1" height="1" fill="#000000"/><rect x="13" y="1" width="1" height="1" fill="#000000"/><rect x="17" y="1" width="1" height="1" fill="#000000"/><rect x="0" y="2" width="1" height="1" fill="#000000"/><rect x="2" y="2" width="1" height="1" fill="#000000"/><rect x="4" y="2" width="1" height="1" fill="#000000"/><rect x="6" y="2" width="1" height="1" fill="#000000"/><rect x="8" y="2" width="1" height="1" fill="#000000"/><rect x="10" y="2" width="1" height="1" fill="#000000"/><rect x="12" y="2" width="1" height="1" fill="#000000"/><rect x="14" y="2" width="1" height="1" fill="#000000"/><rect x="16" y="2" width="1" height="1" fill="#000000"/><rect x="18" y="2" width="1" height="1" fill="#000000"/></svg>
<div style="left:125px;top:211px;width:18px;height:14px;background:#d4d0c8;box-shadow:inset 1px 1px #fff"></div>
<span class="t" style="left:147px;top:212px;color:#000;font-weight:normal;letter-spacing:-0.15px;font-size:11px;">Jitka</span>
<span class="t" style="left:286px;top:212px;color:#000;font-weight:normal;letter-spacing:-0.15px;font-size:11px;">Černá Petra</span>
<svg style="position:absolute;left:223px;top:215px" width="20" height="3" shape-rendering="crispEdges"><rect x="0" y="0" width="1" height="1" fill="#000000"/><rect x="2" y="0" width="1" height="1" fill="#000000"/><rect x="4" y="0" width="1" height="1" fill="#000000"/><rect x="6" y="0" width="1" height="1" fill="#000000"/><rect x="8" y="0" width="1" height="1" fill="#000000"/><rect x="10" y="0" width="1" height="1" fill="#000000"/><rect x="12" y="0" width="1" height="1" fill="#000000"/><rect x="14" y="0" width="1" height="1" fill="#000000"/><rect x="16" y="0" width="1" height="1" fill="#000000"/><rect x="18" y="0" width="1" height="1" fill="#000000"/><rect x="1" y="1" width="1" height="1" fill="#000000"/><rect x="5" y="1" width="1" height="1" fill="#000000"/><rect x="9" y="1" width="1" height="1" fill="#000000"/><rect x="13" y="1" width="1" height="1" fill="#000000"/><rect x="17" y="1" width="1" height="1" fill="#000000"/><rect x="0" y="2" width="1" height="1" fill="#000000"/><rect x="2" y="2" width="1" height="1" fill="#000000"/><rect x="4" y="2" width="1" height="1" fill="#000000"/><rect x="6" y="2" width="1" height="1" fill="#000000"/><rect x="8" y="2" width="1" height="1" fill="#000000"/><rect x="10" y="2" width="1" height="1" fill="#000000"/><rect x="12" y="2" width="1" height="1" fill="#000000"/><rect x="14" y="2" width="1" height="1" fill="#000000"/><rect x="16" y="2" width="1" height="1" fill="#000000"/><rect x="18" y="2" width="1" height="1" fill="#000000"/></svg>
<div style="left:125px;top:226px;width:18px;height:14px;background:#d4d0c8;box-shadow:inset 1px 1px #fff"></div>
<span class="t" style="left:147px;top:227px;color:#000;font-weight:normal;letter-spacing:-0.15px;font-size:11px;">Radek</span>
<span class="t" style="left:286px;top:227px;color:#000;font-weight:normal;letter-spacing:-0.15px;font-size:11px;">Dlouhý Radek</span>
<svg style="position:absolute;left:223px;top:230px" width="20" height="3" shape-rendering="crispEdges"><rect x="0" y="0" width="1" height="1" fill="#000000"/><rect x="2" y="0" width="1" height="1" fill="#000000"/><rect x="4" y="0" width="1" height="1" fill="#000000"/><rect x="6" y="0" width="1" height="1" fill="#000000"/><rect x="8" y="0" width="1" height="1" fill="#000000"/><rect x="10" y="0" width="1" height="1" fill="#000000"/><rect x="12" y="0" width="1" height="1" fill="#000000"/><rect x="14" y="0" width="1" height="1" fill="#000000"/><rect x="16" y="0" width="1" height="1" fill="#000000"/><rect x="18" y="0" width="1" height="1" fill="#000000"/><rect x="1" y="1" width="1" height="1" fill="#000000"/><rect x="5" y="1" width="1" height="1" fill="#000000"/><rect x="9" y="1" width="1" height="1" fill="#000000"/><rect x="13" y="1" width="1" height="1" fill="#000000"/><rect x="17" y="1" width="1" height="1" fill="#000000"/><rect x="0" y="2" width="1" height="1" fill="#000000"/><rect x="2" y="2" width="1" height="1" fill="#000000"/><rect x="4" y="2" width="1" height="1" fill="#000000"/><rect x="6" y="2" width="1" height="1" fill="#000000"/><rect x="8" y="2" width="1" height="1" fill="#000000"/><rect x="10" y="2" width="1" height="1" fill="#000000"/><rect x="12" y="2" width="1" height="1" fill="#000000"/><rect x="14" y="2" width="1" height="1" fill="#000000"/><rect x="16" y="2" width="1" height="1" fill="#000000"/><rect x="18" y="2" width="1" height="1" fill="#000000"/></svg>
<div style="left:125px;top:241px;width:18px;height:14px;background:#d4d0c8;box-shadow:inset 1px 1px #fff"></div>
<span class="t" style="left:147px;top:242px;color:#000;font-weight:normal;letter-spacing:-0.15px;font-size:11px;">Karel</span>
<span class="t" style="left:286px;top:242px;color:#000;font-weight:normal;letter-spacing:-0.15px;font-size:11px;">Drobný Karel</span>
<svg style="position:absolute;left:223px;top:245px" width="20" height="3" shape-rendering="crispEdges"><rect x="0" y="0" width="1" height="1" fill="#000000"/><rect x="2" y="0" width="1" height="1" fill="#000000"/><rect x="4" y="0" width="1" height="1" fill="#000000"/><rect x="6" y="0" width="1" height="1" fill="#000000"/><rect x="8" y="0" width="1" height="1" fill="#000000"/><rect x="10" y="0" width="1" height="1" fill="#000000"/><rect x="12" y="0" width="1" height="1" fill="#000000"/><rect x="14" y="0" width="1" height="1" fill="#000000"/><rect x="16" y="0" width="1" height="1" fill="#000000"/><rect x="18" y="0" width="1" height="1" fill="#000000"/><rect x="1" y="1" width="1" height="1" fill="#000000"/><rect x="5" y="1" width="1" height="1" fill="#000000"/><rect x="9" y="1" width="1" height="1" fill="#000000"/><rect x="13" y="1" width="1" height="1" fill="#000000"/><rect x="17" y="1" width="1" height="1" fill="#000000"/><rect x="0" y="2" width="1" height="1" fill="#000000"/><rect x="2" y="2" width="1" height="1" fill="#000000"/><rect x="4" y="2" width="1" height="1" fill="#000000"/><rect x="6" y="2" width="1" height="1" fill="#000000"/><rect x="8" y="2" width="1" height="1" fill="#000000"/><rect x="10" y="2" width="1" height="1" fill="#000000"/><rect x="12" y="2" width="1" height="1" fill="#000000"/><rect x="14" y="2" width="1" height="1" fill="#000000"/><rect x="16" y="2" width="1" height="1" fill="#000000"/><rect x="18" y="2" width="1" height="1" fill="#000000"/></svg>
<div style="left:125px;top:256px;width:18px;height:14px;background:#d4d0c8;box-shadow:inset 1px 1px #fff"></div>
<span class="t" style="left:147px;top:257px;color:#000;font-weight:normal;letter-spacing:-0.15px;font-size:11px;">Bára</span>
<span class="t" style="left:286px;top:257px;color:#000;font-weight:normal;letter-spacing:-0.15px;font-size:11px;">Hrubá Barbora</span>
<svg style="position:absolute;left:223px;top:260px" width="16" height="3" shape-rendering="crispEdges"><rect x="0" y="0" width="1" height="1" fill="#000000"/><rect x="2" y="0" width="1" height="1" fill="#000000"/><rect x="4" y="0" width="1" height="1" fill="#000000"/><rect x="6" y="0" width="1" height="1" fill="#000000"/><rect x="8" y="0" width="1" height="1" fill="#000000"/><rect x="10" y="0" width="1" height="1" fill="#000000"/><rect x="12" y="0" width="1" height="1" fill="#000000"/><rect x="14" y="0" width="1" height="1" fill="#000000"/><rect x="1" y="1" width="1" height="1" fill="#000000"/><rect x="5" y="1" width="1" height="1" fill="#000000"/><rect x="9" y="1" width="1" height="1" fill="#000000"/><rect x="13" y="1" width="1" height="1" fill="#000000"/><rect x="0" y="2" width="1" height="1" fill="#000000"/><rect x="2" y="2" width="1" height="1" fill="#000000"/><rect x="4" y="2" width="1" height="1" fill="#000000"/><rect x="6" y="2" width="1" height="1" fill="#000000"/><rect x="8" y="2" width="1" height="1" fill="#000000"/><rect x="10" y="2" width="1" height="1" fill="#000000"/><rect x="12" y="2" width="1" height="1" fill="#000000"/><rect x="14" y="2" width="1" height="1" fill="#000000"/></svg>
<div style="left:125px;top:271px;width:18px;height:14px;background:#d4d0c8;box-shadow:inset 1px 1px #fff"></div>
<span class="t" style="left:147px;top:272px;color:#000;font-weight:normal;letter-spacing:-0.15px;font-size:11px;">Mirek</span>
<span class="t" style="left:286px;top:272px;color:#000;font-weight:normal;letter-spacing:-0.15px;font-size:11px;">Krátký Karel</span>
<svg style="position:absolute;left:223px;top:275px" width="20" height="3" shape-rendering="crispEdges"><rect x="0" y="0" width="1" height="1" fill="#000000"/><rect x="2" y="0" width="1" height="1" fill="#000000"/><rect x="4" y="0" width="1" height="1" fill="#000000"/><rect x="6" y="0" width="1" height="1" fill="#000000"/><rect x="8" y="0" width="1" height="1" fill="#000000"/><rect x="10" y="0" width="1" height="1" fill="#000000"/><rect x="12" y="0" width="1" height="1" fill="#000000"/><rect x="14" y="0" width="1" height="1" fill="#000000"/><rect x="16" y="0" width="1" height="1" fill="#000000"/><rect x="18" y="0" width="1" height="1" fill="#000000"/><rect x="1" y="1" width="1" height="1" fill="#000000"/><rect x="5" y="1" width="1" height="1" fill="#000000"/><rect x="9" y="1" width="1" height="1" fill="#000000"/><rect x="13" y="1" width="1" height="1" fill="#000000"/><rect x="17" y="1" width="1" height="1" fill="#000000"/><rect x="0" y="2" width="1" height="1" fill="#000000"/><rect x="2" y="2" width="1" height="1" fill="#000000"/><rect x="4" y="2" width="1" height="1" fill="#000000"/><rect x="6" y="2" width="1" height="1" fill="#000000"/><rect x="8" y="2" width="1" height="1" fill="#000000"/><rect x="10" y="2" width="1" height="1" fill="#000000"/><rect x="12" y="2" width="1" height="1" fill="#000000"/><rect x="14" y="2" width="1" height="1" fill="#000000"/><rect x="16" y="2" width="1" height="1" fill="#000000"/><rect x="18" y="2" width="1" height="1" fill="#000000"/></svg>
<div style="left:125px;top:286px;width:18px;height:14px;background:#d4d0c8;box-shadow:inset 1px 1px #fff"></div>
<span class="t" style="left:147px;top:287px;color:#000;font-weight:normal;letter-spacing:-0.15px;font-size:11px;">Jirka</span>
<span class="t" style="left:286px;top:287px;color:#000;font-weight:normal;letter-spacing:-0.15px;font-size:11px;">Novák Jirka</span>
<svg style="position:absolute;left:223px;top:290px" width="20" height="3" shape-rendering="crispEdges"><rect x="0" y="0" width="1" height="1" fill="#000000"/><rect x="2" y="0" width="1" height="1" fill="#000000"/><rect x="4" y="0" width="1" height="1" fill="#000000"/><rect x="6" y="0" width="1" height="1" fill="#000000"/><rect x="8" y="0" width="1" height="1" fill="#000000"/><rect x="10" y="0" width="1" height="1" fill="#000000"/><rect x="12" y="0" width="1" height="1" fill="#000000"/><rect x="14" y="0" width="1" height="1" fill="#000000"/><rect x="16" y="0" width="1" height="1" fill="#000000"/><rect x="18" y="0" width="1" height="1" fill="#000000"/><rect x="1" y="1" width="1" height="1" fill="#000000"/><rect x="5" y="1" width="1" height="1" fill="#000000"/><rect x="9" y="1" width="1" height="1" fill="#000000"/><rect x="13" y="1" width="1" height="1" fill="#000000"/><rect x="17" y="1" width="1" height="1" fill="#000000"/><rect x="0" y="2" width="1" height="1" fill="#000000"/><rect x="2" y="2" width="1" height="1" fill="#000000"/><rect x="4" y="2" width="1" height="1" fill="#000000"/><rect x="6" y="2" width="1" height="1" fill="#000000"/><rect x="8" y="2" width="1" height="1" fill="#000000"/><rect x="10" y="2" width="1" height="1" fill="#000000"/><rect x="12" y="2" width="1" height="1" fill="#000000"/><rect x="14" y="2" width="1" height="1" fill="#000000"/><rect x="16" y="2" width="1" height="1" fill="#000000"/><rect x="18" y="2" width="1" height="1" fill="#000000"/></svg>
<div style="left:125px;top:301px;width:18px;height:14px;background:#d4d0c8;box-shadow:inset 1px 1px #fff"></div>
<span class="t" style="left:147px;top:302px;color:#000;font-weight:normal;letter-spacing:-0.15px;font-size:11px;">Petr</span>
<span class="t" style="left:286px;top:302px;color:#000;font-weight:normal;letter-spacing:-0.15px;font-size:11px;">Novák Petr</span>
<svg style="position:absolute;left:223px;top:305px" width="16" height="3" shape-rendering="crispEdges"><rect x="0" y="0" width="1" height="1" fill="#000000"/><rect x="2" y="0" width="1" height="1" fill="#000000"/><rect x="4" y="0" width="1" height="1" fill="#000000"/><rect x="6" y="0" width="1" height="1" fill="#000000"/><rect x="8" y="0" width="1" height="1" fill="#000000"/><rect x="10" y="0" width="1" height="1" fill="#000000"/><rect x="12" y="0" width="1" height="1" fill="#000000"/><rect x="14" y="0" width="1" height="1" fill="#000000"/><rect x="1" y="1" width="1" height="1" fill="#000000"/><rect x="5" y="1" width="1" height="1" fill="#000000"/><rect x="9" y="1" width="1" height="1" fill="#000000"/><rect x="13" y="1" width="1" height="1" fill="#000000"/><rect x="0" y="2" width="1" height="1" fill="#000000"/><rect x="2" y="2" width="1" height="1" fill="#000000"/><rect x="4" y="2" width="1" height="1" fill="#000000"/><rect x="6" y="2" width="1" height="1" fill="#000000"/><rect x="8" y="2" width="1" height="1" fill="#000000"/><rect x="10" y="2" width="1" height="1" fill="#000000"/><rect x="12" y="2" width="1" height="1" fill="#000000"/><rect x="14" y="2" width="1" height="1" fill="#000000"/></svg>
<div style="left:125px;top:316px;width:18px;height:14px;background:#d4d0c8;box-shadow:inset 1px 1px #fff"></div>
<span class="t" style="left:147px;top:317px;color:#000;font-weight:normal;letter-spacing:-0.15px;font-size:11px;">David</span>
<span class="t" style="left:286px;top:317px;color:#000;font-weight:normal;letter-spacing:-0.15px;font-size:11px;">Rychlý David</span>
<svg style="position:absolute;left:223px;top:320px" width="20" height="3" shape-rendering="crispEdges"><rect x="0" y="0" width="1" height="1" fill="#000000"/><rect x="2" y="0" width="1" height="1" fill="#000000"/><rect x="4" y="0" width="1" height="1" fill="#000000"/><rect x="6" y="0" width="1" height="1" fill="#000000"/><rect x="8" y="0" width="1" height="1" fill="#000000"/><rect x="10" y="0" width="1" height="1" fill="#000000"/><rect x="12" y="0" width="1" height="1" fill="#000000"/><rect x="14" y="0" width="1" height="1" fill="#000000"/><rect x="16" y="0" width="1" height="1" fill="#000000"/><rect x="18" y="0" width="1" height="1" fill="#000000"/><rect x="1" y="1" width="1" height="1" fill="#000000"/><rect x="5" y="1" width="1" height="1" fill="#000000"/><rect x="9" y="1" width="1" height="1" fill="#000000"/><rect x="13" y="1" width="1" height="1" fill="#000000"/><rect x="17" y="1" width="1" height="1" fill="#000000"/><rect x="0" y="2" width="1" height="1" fill="#000000"/><rect x="2" y="2" width="1" height="1" fill="#000000"/><rect x="4" y="2" width="1" height="1" fill="#000000"/><rect x="6" y="2" width="1" height="1" fill="#000000"/><rect x="8" y="2" width="1" height="1" fill="#000000"/><rect x="10" y="2" width="1" height="1" fill="#000000"/><rect x="12" y="2" width="1" height="1" fill="#000000"/><rect x="14" y="2" width="1" height="1" fill="#000000"/><rect x="16" y="2" width="1" height="1" fill="#000000"/><rect x="18" y="2" width="1" height="1" fill="#000000"/></svg>
<div style="left:125px;top:331px;width:18px;height:14px;background:#d4d0c8;box-shadow:inset 1px 1px #fff"></div>
<span class="t" style="left:147px;top:332px;color:#000;font-weight:normal;letter-spacing:-0.15px;font-size:11px;">Tomáš</span>
<span class="t" style="left:286px;top:332px;color:#000;font-weight:normal;letter-spacing:-0.15px;font-size:11px;">Vrbata Tomáš</span>
<svg style="position:absolute;left:223px;top:335px" width="20" height="3" shape-rendering="crispEdges"><rect x="0" y="0" width="1" height="1" fill="#000000"/><rect x="2" y="0" width="1" height="1" fill="#000000"/><rect x="4" y="0" width="1" height="1" fill="#000000"/><rect x="6" y="0" width="1" height="1" fill="#000000"/><rect x="8" y="0" width="1" height="1" fill="#000000"/><rect x="10" y="0" width="1" height="1" fill="#000000"/><rect x="12" y="0" width="1" height="1" fill="#000000"/><rect x="14" y="0" width="1" height="1" fill="#000000"/><rect x="16" y="0" width="1" height="1" fill="#000000"/><rect x="18" y="0" width="1" height="1" fill="#000000"/><rect x="1" y="1" width="1" height="1" fill="#000000"/><rect x="5" y="1" width="1" height="1" fill="#000000"/><rect x="9" y="1" width="1" height="1" fill="#000000"/><rect x="13" y="1" width="1" height="1" fill="#000000"/><rect x="17" y="1" width="1" height="1" fill="#000000"/><rect x="0" y="2" width="1" height="1" fill="#000000"/><rect x="2" y="2" width="1" height="1" fill="#000000"/><rect x="4" y="2" width="1" height="1" fill="#000000"/><rect x="6" y="2" width="1" height="1" fill="#000000"/><rect x="8" y="2" width="1" height="1" fill="#000000"/><rect x="10" y="2" width="1" height="1" fill="#000000"/><rect x="12" y="2" width="1" height="1" fill="#000000"/><rect x="14" y="2" width="1" height="1" fill="#000000"/><rect x="16" y="2" width="1" height="1" fill="#000000"/><rect x="18" y="2" width="1" height="1" fill="#000000"/></svg>
<div style="left:125px;top:346px;width:18px;height:14px;background:#d4d0c8;box-shadow:inset 1px 1px #fff"></div>
<span class="t" style="left:147px;top:347px;color:#000;font-weight:normal;letter-spacing:-0.15px;font-size:11px;">Petra</span>
<span class="t" style="left:286px;top:347px;color:#000;font-weight:normal;letter-spacing:-0.15px;font-size:11px;">Zelená Petra</span>
<svg style="position:absolute;left:223px;top:350px" width="20" height="3" shape-rendering="crispEdges"><rect x="0" y="0" width="1" height="1" fill="#000000"/><rect x="2" y="0" width="1" height="1" fill="#000000"/><rect x="4" y="0" width="1" height="1" fill="#000000"/><rect x="6" y="0" width="1" height="1" fill="#000000"/><rect x="8" y="0" width="1" height="1" fill="#000000"/><rect x="10" y="0" width="1" height="1" fill="#000000"/><rect x="12" y="0" width="1" height="1" fill="#000000"/><rect x="14" y="0" width="1" height="1" fill="#000000"/><rect x="16" y="0" width="1" height="1" fill="#000000"/><rect x="18" y="0" width="1" height="1" fill="#000000"/><rect x="1" y="1" width="1" height="1" fill="#000000"/><rect x="5" y="1" width="1" height="1" fill="#000000"/><rect x="9" y="1" width="1" height="1" fill="#000000"/><rect x="13" y="1" width="1" height="1" fill="#000000"/><rect x="17" y="1" width="1" height="1" fill="#000000"/><rect x="0" y="2" width="1" height="1" fill="#000000"/><rect x="2" y="2" width="1" height="1" fill="#000000"/><rect x="4" y="2" width="1" height="1" fill="#000000"/><rect x="6" y="2" width="1" height="1" fill="#000000"/><rect x="8" y="2" width="1" height="1" fill="#000000"/><rect x="10" y="2" width="1" height="1" fill="#000000"/><rect x="12" y="2" width="1" height="1" fill="#000000"/><rect x="14" y="2" width="1" height="1" fill="#000000"/><rect x="16" y="2" width="1" height="1" fill="#000000"/><rect x="18" y="2" width="1" height="1" fill="#000000"/></svg>
<div style="left:125px;top:361px;width:18px;height:14px;background:#d4d0c8;box-shadow:inset 1px 1px #fff"></div>
<svg style="position:absolute;left:130px;top:364px" width="9" height="9" shape-rendering="crispEdges"><rect x="4" y="0" width="1" height="1" fill="#000000"/><rect x="1" y="1" width="1" height="1" fill="#000000"/><rect x="4" y="1" width="1" height="1" fill="#000000"/><rect x="7" y="1" width="1" height="1" fill="#000000"/><rect x="2" y="2" width="1" height="1" fill="#000000"/><rect x="4" y="2" width="1" height="1" fill="#000000"/><rect x="6" y="2" width="1" height="1" fill="#000000"/><rect x="3" y="3" width="3" height="1" fill="#000000"/><rect x="0" y="4" width="9" height="1" fill="#000000"/><rect x="3" y="5" width="3" height="1" fill="#000000"/><rect x="2" y="6" width="1" height="1" fill="#000000"/><rect x="4" y="6" width="1" height="1" fill="#000000"/><rect x="6" y="6" width="1" height="1" fill="#000000"/><rect x="1" y="7" width="1" height="1" fill="#000000"/><rect x="4" y="7" width="1" height="1" fill="#000000"/><rect x="7" y="7" width="1" height="1" fill="#000000"/><rect x="4" y="8" width="1" height="1" fill="#000000"/></svg>
<svg style="position:absolute;left:132px;top:258px" width="6" height="11" shape-rendering="crispEdges"><rect x="0" y="0" width="1" height="1" fill="#000000"/><rect x="0" y="1" width="2" height="1" fill="#000000"/><rect x="0" y="2" width="3" height="1" fill="#000000"/><rect x="0" y="3" width="4" height="1" fill="#000000"/><rect x="0" y="4" width="5" height="1" fill="#000000"/><rect x="0" y="5" width="6" height="1" fill="#000000"/><rect x="0" y="6" width="5" height="1" fill="#000000"/><rect x="0" y="7" width="4" height="1" fill="#000000"/><rect x="0" y="8" width="3" height="1" fill="#000000"/><rect x="0" y="9" width="2" height="1" fill="#000000"/><rect x="0" y="10" width="1" height="1" fill="#000000"/></svg>
<span class="t" style="left:124px;top:408px;color:#000;font-weight:normal;letter-spacing:-0.15px;font-size:11px;">Podrobná přístupová práva uživatele vybraného v seznamu</span>
<div style="left:124px;top:424px;width:137px;height:33px;background:#d4d0c8;box-shadow:inset -1px -1px #404040,inset 1px 1px #ffffff,inset -2px -2px #808080,inset 2px 2px #d4d0c8;"></div>
<span class="t" style="left:133px;top:434px;color:#000;font-weight:normal;letter-spacing:-0.15px;font-size:11px;"><u>O</u>becná přístupová práva</span>
<div style="left:268px;top:424px;width:317px;height:33px;background:#d4d0c8;box-shadow:inset -1px -1px #404040,inset 1px 1px #ffffff,inset -2px -2px #808080,inset 2px 2px #d4d0c8;"></div>
<span class="t" style="left:275px;top:434px;color:#000;font-weight:normal;letter-spacing:-0.15px;font-size:11px;">Přístupová práva: <u>V</u>ozidla</span>
<div style="left:377px;top:90px;width:439px;height:433px;background:#d4d0c8;box-shadow:inset -1px -1px #404040,inset 1px 1px #d4d0c8,inset -2px -2px #808080,inset 2px 2px #ffffff;"></div>
<div style="left:380px;top:93px;width:433px;height:18px;background:linear-gradient(90deg,#0a246a,#a6caf0)"></div>
<span class="t" style="left:382px;top:96px;color:#fff;font-weight:bold;letter-spacing:0.35px;font-size:11px;">Hrubá Barbora: Přístupová práva k vozidlům</span>
<div style="left:795px;top:95px;width:16px;height:14px;background:#d4d0c8;box-shadow:inset -1px -1px #404040,inset 1px 1px #ffffff,inset -2px -2px #808080,inset 2px 2px #d4d0c8;"></div>
<svg style="position:absolute;left:799px;top:98px" width="8" height="7" shape-rendering="crispEdges"><rect x="0" y="0" width="2" height="1" fill="#000000"/><rect x="6" y="0" width="2" height="1" fill="#000000"/><rect x="1" y="1" width="2" height="1" fill="#000000"/><rect x="5" y="1" width="2" height="1" fill="#000000"/><rect x="2" y="2" width="4" height="1" fill="#000000"/><rect x="3" y="3" width="2" height="1" fill="#000000"/><rect x="2" y="4" width="4" height="1" fill="#000000"/><rect x="1" y="5" width="2" height="1" fill="#000000"/><rect x="5" y="5" width="2" height="1" fill="#000000"/><rect x="0" y="6" width="2" height="1" fill="#000000"/><rect x="6" y="6" width="2" height="1" fill="#000000"/></svg>
<span class="t" style="left:388px;top:121px;color:#000;font-weight:normal;letter-spacing:-0.15px;font-size:11px;"><u>S</u>eznam operací</span>
<div style="left:388px;top:136px;width:417px;height:154px;background:#fff;box-shadow:inset -1px -1px #ffffff,inset 1px 1px #808080,inset -2px -2px #d4d0c8,inset 2px 2px #404040;"></div>
<div style="left:392px;top:140px;width:11px;height:11px;background:#fff;border:1px solid #505050;box-sizing:border-box"></div>
<span class="t" style="left:406px;top:139px;color:#000;font-weight:normal;letter-spacing:-0.15px;font-size:11px;">Výmaz vozidla</span>
<div style="left:405px;top:153px;width:382px;height:15px;background:#0a246a"></div>
<div style="left:392px;top:155px;width:11px;height:11px;background:#fff;border:1px solid #505050;box-sizing:border-box"></div>
<svg style="position:absolute;left:394px;top:157px" width="7" height="7" shape-rendering="crispEdges"><rect x="6" y="0" width="1" height="1" fill="#000000"/><rect x="5" y="1" width="2" height="1" fill="#000000"/><rect x="0" y="2" width="1" height="1" fill="#000000"/><rect x="4" y="2" width="3" height="1" fill="#000000"/><rect x="0" y="3" width="2" height="1" fill="#000000"/><rect x="3" y="3" width="3" height="1" fill="#000000"/><rect x="0" y="4" width="5" height="1" fill="#000000"/><rect x="1" y="5" width="3" height="1" fill="#000000"/><rect x="2" y="6" width="1" height="1" fill="#000000"/></svg>
<span class="t" style="left:406px;top:154px;color:#fff;font-weight:normal;letter-spacing:-0.15px;font-size:11px;">Změna údajů o vozidle (karta,Výměna SPZ/tachometru,Vyřazení SPZ)</span>
<div style="left:392px;top:170px;width:11px;height:11px;background:#fff;border:1px solid #505050;box-sizing:border-box"></div>
<svg style="position:absolute;left:394px;top:172px" width="7" height="7" shape-rendering="crispEdges"><rect x="6" y="0" width="1" height="1" fill="#000000"/><rect x="5" y="1" width="2" height="1" fill="#000000"/><rect x="0" y="2" width="1" height="1" fill="#000000"/><rect x="4" y="2" width="3" height="1" fill="#000000"/><rect x="0" y="3" width="2" height="1" fill="#000000"/><rect x="3" y="3" width="3" height="1" fill="#000000"/><rect x="0" y="4" width="5" height="1" fill="#000000"/><rect x="1" y="5" width="3" height="1" fill="#000000"/><rect x="2" y="6" width="1" height="1" fill="#000000"/></svg>
<span class="t" style="left:406px;top:169px;color:#000;font-weight:normal;letter-spacing:-0.15px;font-size:11px;">Ostatní výdaje - prohlížení</span>
<div style="left:392px;top:185px;width:11px;height:11px;background:#fff;border:1px solid #505050;box-sizing:border-box"></div>
<svg style="position:absolute;left:394px;top:187px" width="7" height="7" shape-rendering="crispEdges"><rect x="6" y="0" width="1" height="1" fill="#000000"/><rect x="5" y="1" width="2" height="1" fill="#000000"/><rect x="0" y="2" width="1" height="1" fill="#000000"/><rect x="4" y="2" width="3" height="1" fill="#000000"/><rect x="0" y="3" width="2" height="1" fill="#000000"/><rect x="3" y="3" width="3" height="1" fill="#000000"/><rect x="0" y="4" width="5" height="1" fill="#000000"/><rect x="1" y="5" width="3" height="1" fill="#000000"/><rect x="2" y="6" width="1" height="1" fill="#000000"/></svg>
<span class="t" style="left:406px;top:184px;color:#000;font-weight:normal;letter-spacing:-0.15px;font-size:11px;">Ostatní výdaje - výmaz, editace, přidávání</span>
<div style="left:392px;top:200px;width:11px;height:11px;background:#fff;border:1px solid #505050;box-sizing:border-box"></div>
<span class="t" style="left:406px;top:199px;color:#000;font-weight:normal;letter-spacing:-0.15px;font-size:11px;">Ostatní výdaje - modifikace záznamů z platebních karet</span>
<div style="left:392px;top:215px;width:11px;height:11px;background:#fff;border:1px solid #505050;box-sizing:border-box"></div>
<svg style="position:absolute;left:394px;top:217px" width="7" height="7" shape-rendering="crispEdges"><rect x="6" y="0" width="1" height="1" fill="#000000"/><rect x="5" y="1" width="2" height="1" fill="#000000"/><rect x="0" y="2" width="1" height="1" fill="#000000"/><rect x="4" y="2" width="3" height="1" fill="#000000"/><rect x="0" y="3" width="2" height="1" fill="#000000"/><rect x="3" y="3" width="3" height="1" fill="#000000"/><rect x="0" y="4" width="5" height="1" fill="#000000"/><rect x="1" y="5" width="3" height="1" fill="#000000"/><rect x="2" y="6" width="1" height="1" fill="#000000"/></svg>
<span class="t" style="left:406px;top:214px;color:#000;font-weight:normal;letter-spacing:-0.15px;font-size:11px;">Účty PHM - prohlížení</span>
<div style="left:392px;top:230px;width:11px;height:11px;background:#fff;border:1px solid #505050;box-sizing:border-box"></div>
<svg style="position:absolute;left:394px;top:232px" width="7" height="7" shape-rendering="crispEdges"><rect x="6" y="0" width="1" height="1" fill="#000000"/><rect x="5" y="1" width="2" height="1" fill="#000000"/><rect x="0" y="2" width="1" height="1" fill="#000000"/><rect x="4" y="2" width="3" height="1" fill="#000000"/><rect x="0" y="3" width="2" height="1" fill="#000000"/><rect x="3" y="3" width="3" height="1" fill="#000000"/><rect x="0" y="4" width="5" height="1" fill="#000000"/><rect x="1" y="5" width="3" height="1" fill="#000000"/><rect x="2" y="6" width="1" height="1" fill="#000000"/></svg>
<span class="t" style="left:406px;top:229px;color:#000;font-weight:normal;letter-spacing:-0.15px;font-size:11px;">Účty PHM - výmaz, editace, přidávání; Spotřeba - editace stavů nádrže</span>
<div style="left:392px;top:245px;width:11px;height:11px;background:#fff;border:1px solid #505050;box-sizing:border-box"></div>
<span class="t" style="left:406px;top:244px;color:#000;font-weight:normal;letter-spacing:-0.15px;font-size:11px;">Účty PHM - modifikace záznamů z platebních karet</span>
<div style="left:392px;top:260px;width:11px;height:11px;background:#fff;border:1px solid #505050;box-sizing:border-box"></div>
<svg style="position:absolute;left:394px;top:262px" width="7" height="7" shape-rendering="crispEdges"><rect x="6" y="0" width="1" height="1" fill="#000000"/><rect x="5" y="1" width="2" height="1" fill="#000000"/><rect x="0" y="2" width="1" height="1" fill="#000000"/><rect x="4" y="2" width="3" height="1" fill="#000000"/><rect x="0" y="3" width="2" height="1" fill="#000000"/><rect x="3" y="3" width="3" height="1" fill="#000000"/><rect x="0" y="4" width="5" height="1" fill="#000000"/><rect x="1" y="5" width="3" height="1" fill="#000000"/><rect x="2" y="6" width="1" height="1" fill="#000000"/></svg>
<span class="t" style="left:406px;top:259px;color:#000;font-weight:normal;letter-spacing:-0.15px;font-size:11px;">Vzorové jízdy - prohlížení</span>
<div style="left:392px;top:275px;width:11px;height:11px;background:#fff;border:1px solid #505050;box-sizing:border-box"></div>
<svg style="position:absolute;left:394px;top:277px" width="7" height="7" shape-rendering="crispEdges"><rect x="6" y="0" width="1" height="1" fill="#000000"/><rect x="5" y="1" width="2" height="1" fill="#000000"/><rect x="0" y="2" width="1" height="1" fill="#000000"/><rect x="4" y="2" width="3" height="1" fill="#000000"/><rect x="0" y="3" width="2" height="1" fill="#000000"/><rect x="3" y="3" width="3" height="1" fill="#000000"/><rect x="0" y="4" width="5" height="1" fill="#000000"/><rect x="1" y="5" width="3" height="1" fill="#000000"/><rect x="2" y="6" width="1" height="1" fill="#000000"/></svg>
<span class="t" style="left:406px;top:274px;color:#000;font-weight:normal;letter-spacing:-0.15px;font-size:11px;">Vzorové jízdy - výmaz, editace, přidávání</span>
<div style="left:787px;top:138px;width:16px;height:150px;background-color:#e8e6e2;background-image:repeating-conic-gradient(#fff 0 25%,#d4d0c8 0 50%);background-size:2px 2px"></div>
<div style="left:787px;top:138px;width:16px;height:16px;background:#d4d0c8;box-shadow:inset -1px -1px #404040,inset 1px 1px #d4d0c8,inset -2px -2px #808080,inset 2px 2px #ffffff;"></div>
<svg style="position:absolute;left:791px;top:144px" width="7" height="4" shape-rendering="crispEdges"><rect x="3" y="0" width="1" height="1" fill="#000000"/><rect x="2" y="1" width="3" height="1" fill="#000000"/><rect x="1" y="2" width="5" height="1" fill="#000000"/><rect x="0" y="3" width="7" height="1" fill="#000000"/></svg>
<div style="left:787px;top:272px;width:16px;height:16px;background:#d4d0c8;box-shadow:inset -1px -1px #404040,inset 1px 1px #d4d0c8,inset -2px -2px #808080,inset 2px 2px #ffffff;"></div>
<svg style="position:absolute;left:791px;top:278px" width="7" height="4" shape-rendering="crispEdges"><rect x="0" y="0" width="7" height="1" fill="#000000"/><rect x="1" y="1" width="5" height="1" fill="#000000"/><rect x="2" y="2" width="3" height="1" fill="#000000"/><rect x="3" y="3" width="1" height="1" fill="#000000"/></svg>
<div style="left:787px;top:154px;width:16px;height:54px;background:#d4d0c8;box-shadow:inset -1px -1px #404040,inset 1px 1px #d4d0c8,inset -2px -2px #808080,inset 2px 2px #ffffff;"></div>
<div style="left:389px;top:302px;width:415px;height:178px;box-shadow:inset 1px 1px #808080,1px 1px 0 #ffffff,inset -1px -1px #808080,inset 2px 2px #ffffff"></div>
<div style="left:394px;top:296px;width:340px;height:11px;background:#d4d0c8"></div>
<span class="t" style="left:397px;top:297px;color:#000;font-weight:normal;letter-spacing:-0.15px;font-size:11px;">Změna údajů o vozidle (karta,Výměna SPZ/tachometru,Vyřazení SPZ)</span>
<svg style="position:absolute;left:397px;top:313px" width="12" height="12" shape-rendering="crispEdges"><rect x="4" y="0" width="4" height="1" fill="#808080"/><rect x="2" y="1" width="2" height="1" fill="#808080"/><rect x="4" y="1" width="4" height="1" fill="#404040"/><rect x="8" y="1" width="2" height="1" fill="#808080"/><rect x="1" y="2" width="1" height="1" fill="#808080"/><rect x="2" y="2" width="2" height="1" fill="#404040"/><rect x="4" y="2" width="4" height="1" fill="#ffffff"/><rect x="8" y="2" width="2" height="1" fill="#404040"/><rect x="10" y="2" width="1" height="1" fill="#ffffff"/><rect x="1" y="3" width="1" height="1" fill="#808080"/><rect x="2" y="3" width="1" height="1" fill="#404040"/><rect x="3" y="3" width="6" height="1" fill="#ffffff"/><rect x="9" y="3" width="1" height="1" fill="#d4d0c8"/><rect x="10" y="3" width="1" height="1" fill="#ffffff"/><rect x="0" y="4" width="1" height="1" fill="#808080"/><rect x="1" y="4" width="1" height="1" fill="#404040"/><rect x="2" y="4" width="8" height="1" fill="#ffffff"/><rect x="10" y="4" width="1" height="1" fill="#d4d0c8"/><rect x="11" y="4" width="1" height="1" fill="#ffffff"/><rect x="0" y="5" width="1" height="1" fill="#808080"/><rect x="1" y="5" width="1" height="1" fill="#404040"/><rect x="2" y="5" width="8" height="1" fill="#ffffff"/><rect x="10" y="5" width="1" height="1" fill="#d4d0c8"/><rect x="11" y="5" width="1" height="1" fill="#ffffff"/><rect x="0" y="6" width="1" height="1" fill="#808080"/><rect x="1" y="6" width="1" height="1" fill="#404040"/><rect x="2" y="6" width="8" height="1" fill="#ffffff"/><rect x="10" y="6" width="1" height="1" fill="#d4d0c8"/><rect x="11" y="6" width="1" height="1" fill="#ffffff"/><rect x="0" y="7" width="1" height="1" fill="#808080"/><rect x="1" y="7" width="1" height="1" fill="#404040"/><rect x="2" y="7" width="8" height="1" fill="#ffffff"/><rect x="10" y="7" width="1" height="1" fill="#d4d0c8"/><rect x="11" y="7" width="1" height="1" fill="#ffffff"/><rect x="1" y="8" width="1" height="1" fill="#808080"/><rect x="2" y="8" width="1" height="1" fill="#404040"/><rect x="3" y="8" width="6" height="1" fill="#ffffff"/><rect x="9" y="8" width="1" height="1" fill="#d4d0c8"/><rect x="10" y="8" width="1" height="1" fill="#ffffff"/><rect x="1" y="9" width="1" height="1" fill="#ffffff"/><rect x="2" y="9" width="2" height="1" fill="#d4d0c8"/><rect x="4" y="9" width="4" height="1" fill="#ffffff"/><rect x="8" y="9" width="2" height="1" fill="#d4d0c8"/><rect x="10" y="9" width="1" height="1" fill="#ffffff"/><rect x="2" y="10" width="2" height="1" fill="#ffffff"/><rect x="4" y="10" width="4" height="1" fill="#d4d0c8"/><rect x="8" y="10" width="2" height="1" fill="#ffffff"/><rect x="4" y="11" width="4" height="1" fill="#ffffff"/></svg>
<span class="t" style="left:415px;top:313px;color:#000;font-weight:normal;letter-spacing:-0.15px;font-size:11px;">Povolit operaci u <u>v</u>šech vozidel</span>
<svg style="position:absolute;left:397px;top:330px" width="12" height="12" shape-rendering="crispEdges"><rect x="4" y="0" width="4" height="1" fill="#808080"/><rect x="2" y="1" width="2" height="1" fill="#808080"/><rect x="4" y="1" width="4" height="1" fill="#404040"/><rect x="8" y="1" width="2" height="1" fill="#808080"/><rect x="1" y="2" width="1" height="1" fill="#808080"/><rect x="2" y="2" width="2" height="1" fill="#404040"/><rect x="4" y="2" width="4" height="1" fill="#ffffff"/><rect x="8" y="2" width="2" height="1" fill="#404040"/><rect x="10" y="2" width="1" height="1" fill="#ffffff"/><rect x="1" y="3" width="1" height="1" fill="#808080"/><rect x="2" y="3" width="1" height="1" fill="#404040"/><rect x="3" y="3" width="6" height="1" fill="#ffffff"/><rect x="9" y="3" width="1" height="1" fill="#d4d0c8"/><rect x="10" y="3" width="1" height="1" fill="#ffffff"/><rect x="0" y="4" width="1" height="1" fill="#808080"/><rect x="1" y="4" width="1" height="1" fill="#404040"/><rect x="2" y="4" width="3" height="1" fill="#ffffff"/><rect x="5" y="4" width="2" height="1" fill="#000000"/><rect x="7" y="4" width="3" height="1" fill="#ffffff"/><rect x="10" y="4" width="1" height="1" fill="#d4d0c8"/><rect x="11" y="4" width="1" height="1" fill="#ffffff"/><rect x="0" y="5" width="1" height="1" fill="#808080"/><rect x="1" y="5" width="1" height="1" fill="#404040"/><rect x="2" y="5" width="2" height="1" fill="#ffffff"/><rect x="4" y="5" width="4" height="1" fill="#000000"/><rect x="8" y="5" width="2" height="1" fill="#ffffff"/><rect x="10" y="5" width="1" height="1" fill="#d4d0c8"/><rect x="11" y="5" width="1" height="1" fill="#ffffff"/><rect x="0" y="6" width="1" height="1" fill="#808080"/><rect x="1" y="6" width="1" height="1" fill="#404040"/><rect x="2" y="6" width="2" height="1" fill="#ffffff"/><rect x="4" y="6" width="4" height="1" fill="#000000"/><rect x="8" y="6" width="2" height="1" fill="#ffffff"/><rect x="10" y="6" width="1" height="1" fill="#d4d0c8"/><rect x="11" y="6" width="1" height="1" fill="#ffffff"/><rect x="0" y="7" width="1" height="1" fill="#808080"/><rect x="1" y="7" width="1" height="1" fill="#404040"/><rect x="2" y="7" width="3" height="1" fill="#ffffff"/><rect x="5" y="7" width="2" height="1" fill="#000000"/><rect x="7" y="7" width="3" height="1" fill="#ffffff"/><rect x="10" y="7" width="1" height="1" fill="#d4d0c8"/><rect x="11" y="7" width="1" height="1" fill="#ffffff"/><rect x="1" y="8" width="1" height="1" fill="#808080"/><rect x="2" y="8" width="1" height="1" fill="#404040"/><rect x="3" y="8" width="6" height="1" fill="#ffffff"/><rect x="9" y="8" width="1" height="1" fill="#d4d0c8"/><rect x="10" y="8" width="1" height="1" fill="#ffffff"/><rect x="1" y="9" width="1" height="1" fill="#ffffff"/><rect x="2" y="9" width="2" height="1" fill="#d4d0c8"/><rect x="4" y="9" width="4" height="1" fill="#ffffff"/><rect x="8" y="9" width="2" height="1" fill="#d4d0c8"/><rect x="10" y="9" width="1" height="1" fill="#ffffff"/><rect x="2" y="10" width="2" height="1" fill="#ffffff"/><rect x="4" y="10" width="4" height="1" fill="#d4d0c8"/><rect x="8" y="10" width="2" height="1" fill="#ffffff"/><rect x="4" y="11" width="4" height="1" fill="#ffffff"/></svg>
<span class="t" style="left:415px;top:330px;color:#000;font-weight:normal;letter-spacing:-0.15px;font-size:11px;">Povolit operaci <u>p</u>ouze u vybraných vozidel</span>
<div style="left:396px;top:345px;width:401px;height:124px;background:#fff;box-shadow:inset -1px -1px #ffffff,inset 1px 1px #808080,inset -2px -2px #d4d0c8,inset 2px 2px #404040;"></div>
<div style="left:400px;top:349px;width:11px;height:11px;background:#fff;border:1px solid #505050;box-sizing:border-box"></div>
<svg style="position:absolute;left:402px;top:351px" width="7" height="7" shape-rendering="crispEdges"><rect x="6" y="0" width="1" height="1" fill="#000000"/><rect x="5" y="1" width="2" height="1" fill="#000000"/><rect x="0" y="2" width="1" height="1" fill="#000000"/><rect x="4" y="2" width="3" height="1" fill="#000000"/><rect x="0" y="3" width="2" height="1" fill="#000000"/><rect x="3" y="3" width="3" height="1" fill="#000000"/><rect x="0" y="4" width="5" height="1" fill="#000000"/><rect x="1" y="5" width="3" height="1" fill="#000000"/><rect x="2" y="6" width="1" height="1" fill="#000000"/></svg>
<span class="t" style="left:414px;top:348px;color:#000;font-weight:normal;letter-spacing:-0.15px;font-size:11px;">AKX 65-98 (Ford Mondeo)</span>
<div style="left:400px;top:364px;width:11px;height:11px;background:#fff;border:1px solid #505050;box-sizing:border-box"></div>
<svg style="position:absolute;left:402px;top:366px" width="7" height="7" shape-rendering="crispEdges"><rect x="6" y="0" width="1" height="1" fill="#000000"/><rect x="5" y="1" width="2" height="1" fill="#000000"/><rect x="0" y="2" width="1" height="1" fill="#000000"/><rect x="4" y="2" width="3" height="1" fill="#000000"/><rect x="0" y="3" width="2" height="1" fill="#000000"/><rect x="3" y="3" width="3" height="1" fill="#000000"/><rect x="0" y="4" width="5" height="1" fill="#000000"/><rect x="1" y="5" width="3" height="1" fill="#000000"/><rect x="2" y="6" width="1" height="1" fill="#000000"/></svg>
<span class="t" style="left:414px;top:363px;color:#000;font-weight:normal;letter-spacing:-0.15px;font-size:11px;">3S9 14-17 (Škoda Octavia Combi)</span>
<div style="left:400px;top:379px;width:11px;height:11px;background:#fff;border:1px solid #505050;box-sizing:border-box"></div>
<svg style="position:absolute;left:402px;top:381px" width="7" height="7" shape-rendering="crispEdges"><rect x="6" y="0" width="1" height="1" fill="#000000"/><rect x="5" y="1" width="2" height="1" fill="#000000"/><rect x="0" y="2" width="1" height="1" fill="#000000"/><rect x="4" y="2" width="3" height="1" fill="#000000"/><rect x="0" y="3" width="2" height="1" fill="#000000"/><rect x="3" y="3" width="3" height="1" fill="#000000"/><rect x="0" y="4" width="5" height="1" fill="#000000"/><rect x="1" y="5" width="3" height="1" fill="#000000"/><rect x="2" y="6" width="1" height="1" fill="#000000"/></svg>
<span class="t" style="left:414px;top:378px;color:#000;font-weight:normal;letter-spacing:-0.15px;font-size:11px;">3A5 77-85 (Renault Clio)</span>
<div style="left:400px;top:394px;width:11px;height:11px;background:#fff;border:1px solid #505050;box-sizing:border-box"></div>
<span class="t" style="left:414px;top:393px;color:#000;font-weight:normal;letter-spacing:-0.15px;font-size:11px;">3A5 77-84 (Renault Megane)</span>
<div style="left:400px;top:409px;width:11px;height:11px;background:#fff;border:1px solid #505050;box-sizing:border-box"></div>
<svg style="position:absolute;left:402px;top:411px" width="7" height="7" shape-rendering="crispEdges"><rect x="6" y="0" width="1" height="1" fill="#000000"/><rect x="5" y="1" width="2" height="1" fill="#000000"/><rect x="0" y="2" width="1" height="1" fill="#000000"/><rect x="4" y="2" width="3" height="1" fill="#000000"/><rect x="0" y="3" width="2" height="1" fill="#000000"/><rect x="3" y="3" width="3" height="1" fill="#000000"/><rect x="0" y="4" width="5" height="1" fill="#000000"/><rect x="1" y="5" width="3" height="1" fill="#000000"/><rect x="2" y="6" width="1" height="1" fill="#000000"/></svg>
<span class="t" style="left:414px;top:408px;color:#000;font-weight:normal;letter-spacing:-0.15px;font-size:11px;">3A4 15-87 (Škoda Fabia)</span>
<div style="left:400px;top:424px;width:11px;height:11px;background:#fff;border:1px solid #505050;box-sizing:border-box"></div>
<svg style="position:absolute;left:402px;top:426px" width="7" height="7" shape-rendering="crispEdges"><rect x="6" y="0" width="1" height="1" fill="#000000"/><rect x="5" y="1" width="2" height="1" fill="#000000"/><rect x="0" y="2" width="1" height="1" fill="#000000"/><rect x="4" y="2" width="3" height="1" fill="#000000"/><rect x="0" y="3" width="2" height="1" fill="#000000"/><rect x="3" y="3" width="3" height="1" fill="#000000"/><rect x="0" y="4" width="5" height="1" fill="#000000"/><rect x="1" y="5" width="3" height="1" fill="#000000"/><rect x="2" y="6" width="1" height="1" fill="#000000"/></svg>
<span class="t" style="left:414px;top:423px;color:#000;font-weight:normal;letter-spacing:-0.15px;font-size:11px;">2S1 33-87 (BMW 5)</span>
<div style="left:413px;top:437px;width:366px;height:15px;background:#0a246a"></div>
<div style="left:400px;top:439px;width:11px;height:11px;background:#fff;border:1px solid #505050;box-sizing:border-box"></div>
<span class="t" style="left:414px;top:438px;color:#fff;font-weight:normal;letter-spacing:-0.15px;font-size:11px;">2A8 11-01 (Škoda Superb)</span>
<div style="left:400px;top:454px;width:11px;height:11px;background:#fff;border:1px solid #505050;box-sizing:border-box"></div>
<svg style="position:absolute;left:402px;top:456px" width="7" height="7" shape-rendering="crispEdges"><rect x="6" y="0" width="1" height="1" fill="#000000"/><rect x="5" y="1" width="2" height="1" fill="#000000"/><rect x="0" y="2" width="1" height="1" fill="#000000"/><rect x="4" y="2" width="3" height="1" fill="#000000"/><rect x="0" y="3" width="2" height="1" fill="#000000"/><rect x="3" y="3" width="3" height="1" fill="#000000"/><rect x="0" y="4" width="5" height="1" fill="#000000"/><rect x="1" y="5" width="3" height="1" fill="#000000"/><rect x="2" y="6" width="1" height="1" fill="#000000"/></svg>
<span class="t" style="left:414px;top:453px;color:#000;font-weight:normal;letter-spacing:-0.15px;font-size:11px;">2A4 42-46 (Škoda Fabia)</span>
<div style="left:779px;top:347px;width:16px;height:120px;background-color:#e8e6e2;background-image:repeating-conic-gradient(#fff 0 25%,#d4d0c8 0 50%);background-size:2px 2px"></div>
<div style="left:779px;top:347px;width:16px;height:16px;background:#d4d0c8;box-shadow:inset -1px -1px #404040,inset 1px 1px #d4d0c8,inset -2px -2px #808080,inset 2px 2px #ffffff;"></div>
<svg style="position:absolute;left:783px;top:353px" width="7" height="4" shape-rendering="crispEdges"><rect x="3" y="0" width="1" height="1" fill="#000000"/><rect x="2" y="1" width="3" height="1" fill="#000000"/><rect x="1" y="2" width="5" height="1" fill="#000000"/><rect x="0" y="3" width="7" height="1" fill="#000000"/></svg>
<div style="left:779px;top:451px;width:16px;height:16px;background:#d4d0c8;box-shadow:inset -1px -1px #404040,inset 1px 1px #d4d0c8,inset -2px -2px #808080,inset 2px 2px #ffffff;"></div>
<svg style="position:absolute;left:783px;top:457px" width="7" height="4" shape-rendering="crispEdges"><rect x="0" y="0" width="7" height="1" fill="#000000"/><rect x="1" y="1" width="5" height="1" fill="#000000"/><rect x="2" y="2" width="3" height="1" fill="#000000"/><rect x="3" y="3" width="1" height="1" fill="#000000"/></svg>
<div style="left:779px;top:363px;width:16px;height:50px;background:#d4d0c8;box-shadow:inset -1px -1px #404040,inset 1px 1px #d4d0c8,inset -2px -2px #808080,inset 2px 2px #ffffff;"></div>
<div style="left:652px;top:488px;width:73px;height:25px;background:#000"></div>
<div style="left:653px;top:489px;width:71px;height:23px;background:#d4d0c8;box-shadow:inset -1px -1px #404040,inset 1px 1px #ffffff,inset -2px -2px #808080,inset 2px 2px #d4d0c8;"></div>
<div style="left:657px;top:493px;width:63px;height:15px;border:1px dotted #000;box-sizing:border-box"></div>
<span class="t" style="left:680px;top:495px;color:#000;font-weight:normal;letter-spacing:-0.15px;font-size:11px;">OK</span>
<div style="left:732px;top:488px;width:73px;height:25px;background:#d4d0c8;box-shadow:inset -1px -1px #404040,inset 1px 1px #ffffff,inset -2px -2px #808080,inset 2px 2px #d4d0c8;"></div>
<span class="t" style="left:752px;top:495px;color:#000;font-weight:normal;letter-spacing:-0.15px;font-size:11px;">Storno</span>
</body></html>
